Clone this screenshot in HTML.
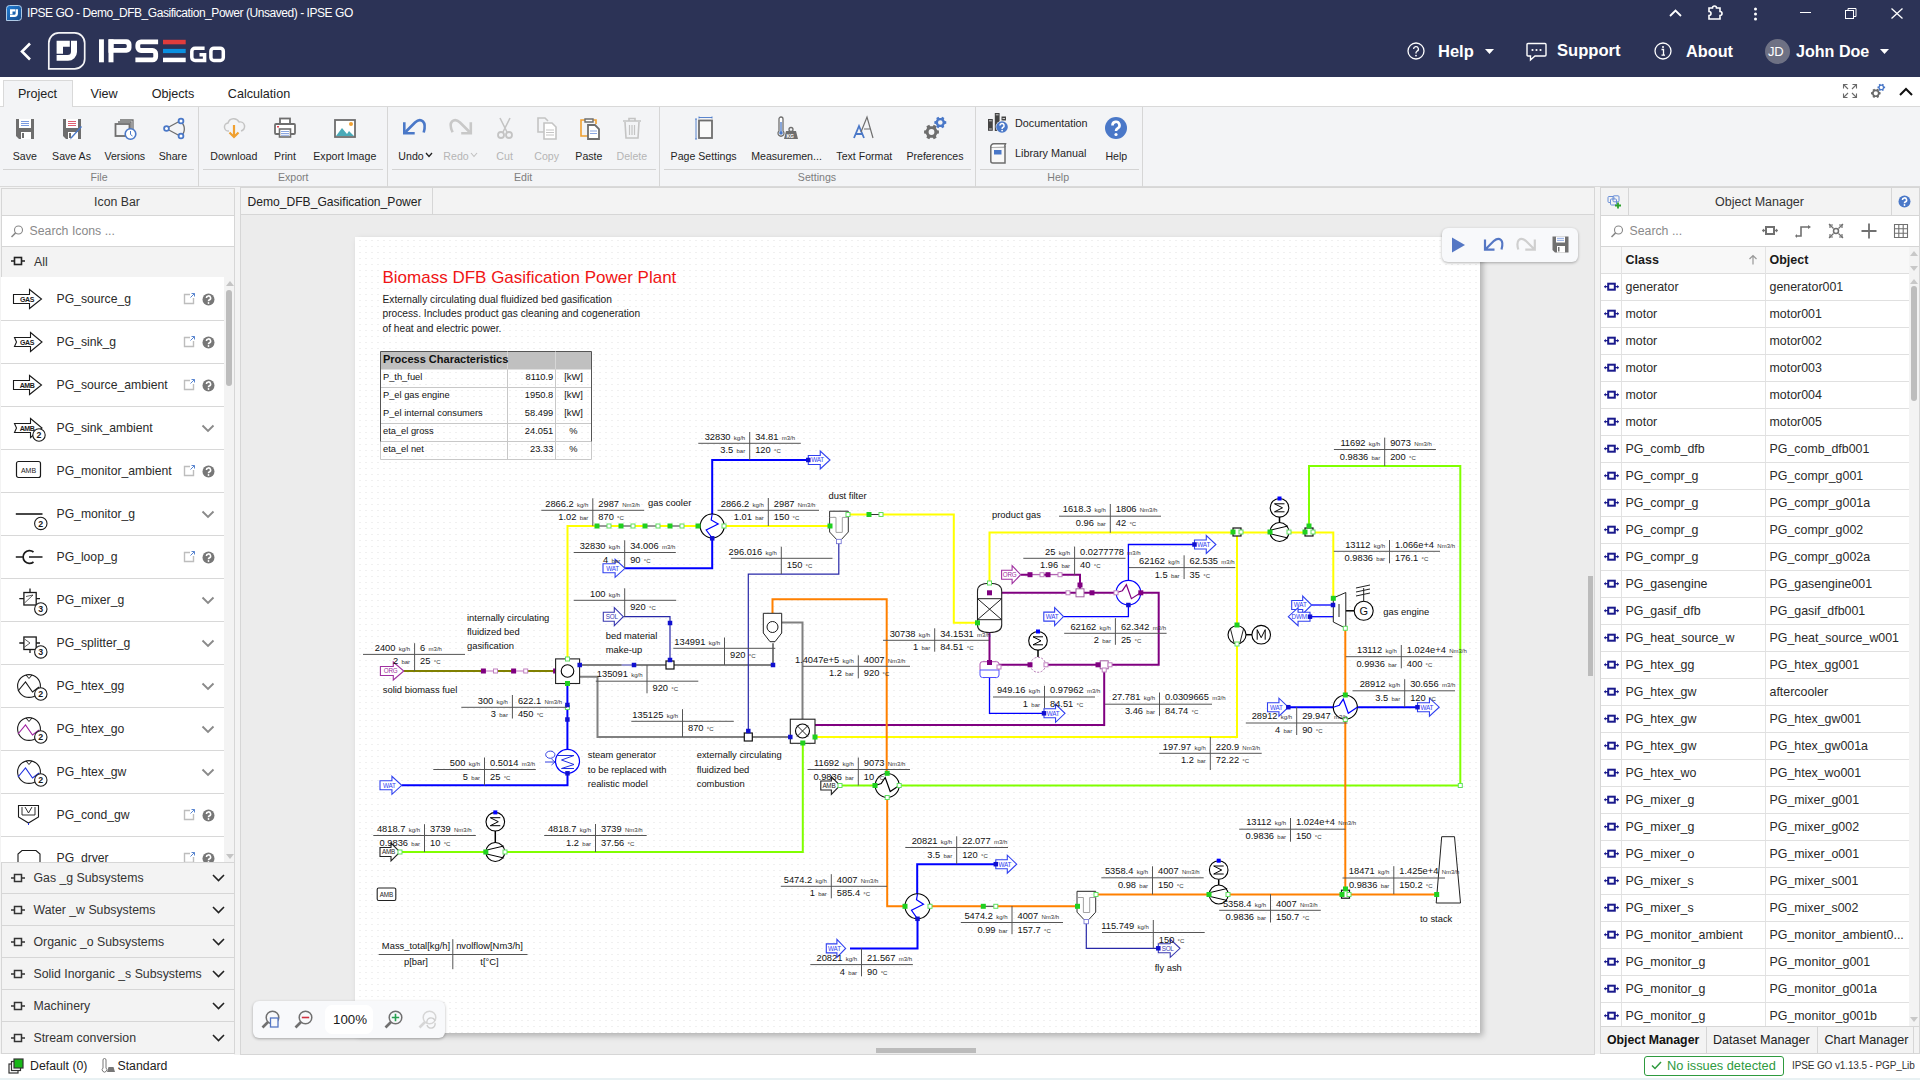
<!DOCTYPE html>
<html><head><meta charset="utf-8">
<style>

*{box-sizing:border-box;margin:0;padding:0}
html,body{width:1920px;height:1080px;overflow:hidden;background:#fff;font-family:"Liberation Sans",sans-serif;color:#222;position:relative}
.a{position:absolute}
.t{position:absolute;white-space:nowrap;line-height:1}
svg{position:absolute;overflow:visible}

</style></head><body>
<div class="a" style="left:0;top:0;width:1920px;height:77px;background:#2c3356"></div>
<svg style="left:5px;top:4px" width="18" height="18" viewBox="0 0 18 18"><defs><linearGradient id="ag" x1="0" y1="0" x2="1" y2="1"><stop offset="0" stop-color="#1e7ed8"/><stop offset="1" stop-color="#1a4a88"/></linearGradient></defs><path d="M1.5,16.5 V4.5 A3,3 0 0 1 4.5,1.5 H13.5 A3,3 0 0 1 16.5,4.5 V13.5 A3,3 0 0 1 13.5,16.5 Z" fill="url(#ag)" stroke="#c0d8f0" stroke-width="0.9"/><g transform="translate(1.26,1.77) scale(0.39)"><path d="M9.6,8.8 H22.8 V14.7 H16 V21.8 H9.6 Z M24,8.8 H30 V20 A9,9 0 0 1 21,28.8 H9.6 V23 H20.5 A3.5,3.5 0 0 0 24,19.5 Z" fill="#fff"/></g></svg>
<div class="t" style="left:27px;top:7px;font-size:12px;color:#fff;letter-spacing:-0.45px">IPSE GO - Demo_DFB_Gasification_Power (Unsaved) - IPSE GO</div>
<svg style="left:1669px;top:9px" width="13" height="8" viewBox="0 0 13 8"><path d="M1 7L6.5 1.5L12 7" stroke="#fff" stroke-width="1.8" fill="none"/></svg>
<svg style="left:1707px;top:5px" width="17" height="15" viewBox="0 0 17 15"><path d="M2 3h3.5a2 2 0 0 1 4 0H13v3.5a2 2 0 0 1 0 4V14H2v-3.5a2 2 0 0 0 0-4z" stroke="#fff" stroke-width="1.6" fill="none"/></svg>
<svg style="left:1753px;top:7px" width="5" height="14" viewBox="0 0 5 14"><circle cx="2.5" cy="2" r="1.5" fill="#fff"/><circle cx="2.5" cy="7" r="1.5" fill="#fff"/><circle cx="2.5" cy="12" r="1.5" fill="#fff"/></svg>
<div class="a" style="left:1800px;top:12px;width:11px;height:1px;background:#fff"></div>
<svg style="left:1845px;top:8px" width="12" height="11" viewBox="0 0 12 11"><rect x="0.5" y="2.5" width="8" height="8" stroke="#fff" fill="none"/><path d="M3 2.5V0.5h8v8H8.5" stroke="#fff" fill="none"/></svg>
<svg style="left:1891px;top:8px" width="12" height="11" viewBox="0 0 12 11"><path d="M0.5 0.5L11.5 10.5M11.5 0.5L0.5 10.5" stroke="#fff" stroke-width="1.3"/></svg>
<svg style="left:19px;top:42px" width="14" height="19" viewBox="0 0 14 19"><path d="M11 1.5L3 9.5L11 17.5" stroke="#fff" stroke-width="2.6" fill="none"/></svg>
<svg style="left:47px;top:32px" width="40" height="39" viewBox="0 0 40 39"><path d="M1.8,36.9 V10.9 A10,10 0 0 1 11.8,0.9 H27.7 A10,10 0 0 1 37.7,10.9 V26.9 A10,10 0 0 1 27.7,36.9 Z" stroke="#f4f4f6" stroke-width="1.7" fill="none"/><path d="M9.6,8.8 H22.8 V14.7 H16 V21.8 H9.6 Z M24,8.8 H30 V20 A9,9 0 0 1 21,28.8 H9.6 V23 H20.5 A3.5,3.5 0 0 0 24,19.5 Z" fill="#fff"/></svg>
<svg style="left:0;top:0" width="240" height="77" viewBox="0 0 240 77"><rect x="99" y="39.3" width="4.9" height="23" fill="#fff"/><rect x="108.5" y="39.3" width="5" height="23" fill="#fff"/><path fill-rule="evenodd" d="M108.5,39.3 H126.5 A5,5 0 0 1 131.5,44.3 V47.8 A5,5 0 0 1 126.5,52.8 H108.5 Z M113.5,44.1 H125.2 A1.6,1.6 0 0 1 126.8,45.7 V46.4 A1.6,1.6 0 0 1 125.2,48 H113.5 Z" fill="#fff"/><path d="M158.1,41.8 H141 A3.2,3.2 0 0 0 137.8,45 V47.3 A3.2,3.2 0 0 0 141,50.5 H152.5 A3.2,3.2 0 0 1 155.7,53.7 V56.7 A3.2,3.2 0 0 1 152.5,59.9 H135.4" stroke="#fff" stroke-width="4.8" fill="none"/><rect x="163" y="39.8" width="22.7" height="4.5" fill="#e03c3c"/><rect x="163" y="48.9" width="22.7" height="4.2" fill="#0a90e0"/><rect x="163" y="57.7" width="22.7" height="4.5" fill="#fff"/><path d="M204.6,48.2 H195 A3.2,3.2 0 0 0 191.8,51.4 V57.3 A3.2,3.2 0 0 0 195,60.5 H204.6 V54.8 H199.5" stroke="#fff" stroke-width="3.5" fill="none"/><rect x="210.9" y="48.2" width="12.4" height="12.3" rx="3" stroke="#fff" stroke-width="3.5" fill="none"/></svg>
<svg style="left:1407px;top:42px" width="18" height="18" viewBox="0 0 18 18"><circle cx="9" cy="9" r="8" stroke="#fff" stroke-width="1.3" fill="none"/><path d="M6.6 7a2.4 2.4 0 1 1 3.4 2.2c-.7.4-1 .8-1 1.6v.6" stroke="#fff" stroke-width="1.3" fill="none"/><circle cx="9" cy="13.6" r=".9" fill="#fff"/></svg>
<div class="t" style="left:1438px;top:43px;font-size:16.5px;font-weight:bold;color:#fff">Help</div>
<svg style="left:1485px;top:49px" width="9" height="5" viewBox="0 0 9 5"><path d="M0 0H9L4.5 5Z" fill="#fff"/></svg>
<svg style="left:1526px;top:42px" width="21" height="19" viewBox="0 0 21 19"><path d="M2 1.5H19Q20 1.5 20 2.5V13Q20 14 19 14H9L4.5 18V14H2Q1 14 1 13V2.5Q1 1.5 2 1.5Z" stroke="#fff" stroke-width="1.4" fill="none"/><circle cx="6.5" cy="8" r="1.1" fill="#fff"/><circle cx="10.5" cy="8" r="1.1" fill="#fff"/><circle cx="14.5" cy="8" r="1.1" fill="#fff"/></svg>
<div class="t" style="left:1557px;top:43px;font-size:16.6px;font-weight:bold;color:#fff">Support</div>
<svg style="left:1654px;top:42px" width="18" height="18" viewBox="0 0 18 18"><circle cx="9" cy="9" r="8" stroke="#fff" stroke-width="1.3" fill="none"/><circle cx="9" cy="5" r="1" fill="#fff"/><path d="M7.5 7.5H9.5V13M7.5 13.2H11" stroke="#fff" stroke-width="1.3" fill="none"/></svg>
<div class="t" style="left:1686px;top:43px;font-size:16.3px;font-weight:bold;color:#fff">About</div>
<div class="a" style="left:1765px;top:39px;width:25px;height:25px;border-radius:50%;background:#6e7184"></div>
<div class="t" style="left:1768px;top:45px;font-size:13px;color:#fff;letter-spacing:-0.3px">JD</div>
<div class="t" style="left:1796px;top:43px;font-size:16.1px;font-weight:bold;color:#fff">John Doe</div>
<svg style="left:1880px;top:49px" width="9" height="5" viewBox="0 0 9 5"><path d="M0 0H9L4.5 5Z" fill="#fff"/></svg>
<div class="a" style="left:0;top:106px;width:1920px;height:1px;background:#d9d9d9"></div>
<div class="a" style="left:3px;top:80px;width:70px;height:27px;background:#f3f4f6;border:1px solid #d9d9d9;border-bottom:none"></div>
<div class="t" style="left:37.5px;top:88px;font-size:12.6px;color:#222;transform:translateX(-50%)">Project</div>
<div class="t" style="left:104px;top:88px;font-size:12.6px;color:#222;transform:translateX(-50%)">View</div>
<div class="t" style="left:173px;top:88px;font-size:12.6px;color:#222;transform:translateX(-50%)">Objects</div>
<div class="t" style="left:259px;top:88px;font-size:12.6px;color:#222;transform:translateX(-50%)">Calculation</div>
<svg style="left:1842px;top:83px" width="16" height="16" viewBox="0 0 16 16"><path d="M1.5 5.5V1.5H5.5M1.5 1.5L6 6M14.5 5.5V1.5H10.5M14.5 1.5L10 6M1.5 10.5V14.5H5.5M1.5 14.5L6 10M14.5 10.5V14.5H10.5M14.5 14.5L10 10" stroke="#6a6a6a" stroke-width="1.1" fill="none"/></svg>
<svg style="left:1860px;top:78px" width="30" height="26" viewBox="1860 78 30 26"><path d="M1879.51,92.09 L1880.59,92.28 L1880.59,94.32 L1879.51,94.51 L1878.70,95.91 L1879.08,96.94 L1877.31,97.96 L1876.61,97.11 L1874.99,97.11 L1874.29,97.96 L1872.52,96.94 L1872.90,95.91 L1872.09,94.51 L1871.01,94.32 L1871.01,92.28 L1872.09,92.09 L1872.90,90.69 L1872.52,89.66 L1874.29,88.64 L1874.99,89.49 L1876.61,89.49 L1877.31,88.64 L1879.08,89.66 L1878.70,90.69Z M1877.8999999999999,93.3 A2.1,2.1 0 1 0 1873.7,93.3 A2.1,2.1 0 1 0 1877.8999999999999,93.3Z" fill="#6a6a6a" fill-rule="evenodd"/><path d="M1884.15,86.47 L1885.11,86.59 L1885.11,88.21 L1884.15,88.33 L1883.53,89.41 L1883.91,90.30 L1882.51,91.11 L1881.92,90.33 L1880.68,90.33 L1880.09,91.11 L1878.69,90.30 L1879.07,89.41 L1878.45,88.33 L1877.49,88.21 L1877.49,86.59 L1878.45,86.47 L1879.07,85.39 L1878.69,84.50 L1880.09,83.69 L1880.68,84.47 L1881.92,84.47 L1882.51,83.69 L1883.91,84.50 L1883.53,85.39Z M1882.8999999999999,87.4 A1.6,1.6 0 1 0 1879.7,87.4 A1.6,1.6 0 1 0 1882.8999999999999,87.4Z" fill="#4a78c8" fill-rule="evenodd"/></svg>
<svg style="left:1899px;top:87px" width="14" height="9" viewBox="0 0 14 9"><path d="M1 8L7 2L13 8" stroke="#111" stroke-width="2" fill="none"/></svg>
<div class="a" style="left:0;top:107px;width:1920px;height:80px;background:#f3f4f6;border-bottom:1px solid #d9d9d9"></div>
<div class="a" style="left:198px;top:107px;width:1px;height:80px;background:#d6d6d6"></div>
<div class="a" style="left:387px;top:107px;width:1px;height:80px;background:#d6d6d6"></div>
<div class="a" style="left:659px;top:107px;width:1px;height:80px;background:#d6d6d6"></div>
<div class="a" style="left:975px;top:107px;width:1px;height:80px;background:#d6d6d6"></div>
<div class="a" style="left:1142px;top:107px;width:1px;height:80px;background:#d6d6d6"></div>
<div class="a" style="left:3px;top:169px;width:191px;height:1px;background:#d3d3d3"></div>
<div class="a" style="left:203px;top:169px;width:180px;height:1px;background:#d3d3d3"></div>
<div class="a" style="left:392px;top:169px;width:264px;height:1px;background:#d3d3d3"></div>
<div class="a" style="left:664px;top:169px;width:307px;height:1px;background:#d3d3d3"></div>
<div class="a" style="left:980px;top:169px;width:159px;height:1px;background:#d3d3d3"></div>
<svg style="left:12.75px;top:116px" width="24" height="24" viewBox="0 0 24 24"><path d="M3 3H21V23H6L3 20Z" fill="#6e6e6e"/><rect x="6" y="3" width="12" height="9" fill="#fff"/><path d="M8 5.5H16M8 7.5H16M8 9.5H16" stroke="#7b9be0" stroke-width="1.1"/><rect x="8" y="16" width="10" height="7" fill="#fff"/><rect x="9" y="17" width="2" height="5" fill="#6e6e6e"/></svg>
<div class="t" style="left:24.75px;top:151px;font-size:10.6px;color:#1f1f1f;transform:translateX(-50%)">Save</div>
<svg style="left:59.5px;top:116px" width="24" height="24" viewBox="0 0 24 24"><path d="M3 3H21V23H6L3 20Z" fill="#6e6e6e"/><rect x="6" y="3" width="12" height="9" fill="#fff"/><path d="M8 5.5H16M8 7.5H16M8 9.5H16" stroke="#e06070" stroke-width="1.1"/><rect x="8" y="16" width="10" height="7" fill="#fff"/><rect x="9" y="17" width="2" height="5" fill="#6e6e6e"/><path d="M22 11L12 22L10 23.5L11 21L21 10Z" fill="#4a78c8"/></svg>
<div class="t" style="left:71.5px;top:151px;font-size:10.6px;color:#1f1f1f;transform:translateX(-50%)">Save As</div>
<svg style="left:112.8px;top:116px" width="24" height="24" viewBox="0 0 24 24"><path d="M7 4H20V15" stroke="#6e6e6e" stroke-width="1.3" fill="none"/><path d="M5 6H18V17" stroke="#6e6e6e" stroke-width="1.3" fill="none"/><rect x="2.5" y="8" width="14" height="12" stroke="#6e6e6e" stroke-width="1.8" fill="#f3f4f6"/><circle cx="17.5" cy="18" r="5.3" fill="#fff" stroke="#4a78c8" stroke-width="1.6"/><path d="M17.5 15V18.5L19.5 20" stroke="#4a78c8" stroke-width="1" fill="none"/></svg>
<div class="t" style="left:124.8px;top:151px;font-size:10.6px;color:#1f1f1f;transform:translateX(-50%)">Versions</div>
<svg style="left:160.9px;top:116px" width="24" height="24" viewBox="0 0 24 24"><path d="M20 6A9 9 0 0 1 20 20" stroke="#6e6e6e" stroke-width="1.3" fill="none"/><path d="M6 12L19 5M6 13L19 20" stroke="#6e6e6e" stroke-width="1.3" fill="none"/><circle cx="20" cy="5" r="2.4" fill="#fff" stroke="#4a78c8" stroke-width="1.8"/><circle cx="5.5" cy="12.5" r="2.4" fill="#fff" stroke="#4a78c8" stroke-width="1.8"/><circle cx="20" cy="20" r="2.4" fill="#fff" stroke="#4a78c8" stroke-width="1.8"/></svg>
<div class="t" style="left:172.9px;top:151px;font-size:10.6px;color:#1f1f1f;transform:translateX(-50%)">Share</div>
<svg style="left:221.8px;top:116px" width="24" height="24" viewBox="0 0 24 24"><path d="M7 15A4 4 0 0 1 6 7A6 6 0 0 1 17 6A4.5 4.5 0 0 1 19 15" stroke="#c4c4c4" stroke-width="1.5" fill="none"/><path d="M12 9V21M7.5 16.5L12 21L16.5 16.5" stroke="#f0a030" stroke-width="2.2" fill="none"/></svg>
<div class="t" style="left:233.8px;top:151px;font-size:10.6px;color:#1f1f1f;transform:translateX(-50%)">Download</div>
<svg style="left:273.0px;top:116px" width="24" height="24" viewBox="0 0 24 24"><rect x="7" y="2.5" width="10" height="6" stroke="#6e6e6e" stroke-width="1.8" fill="#fff"/><rect x="2" y="8" width="20" height="10" rx="1" stroke="#6e6e6e" stroke-width="1.8" fill="#fff"/><rect x="4" y="10" width="2" height="1.5" fill="#e04050"/><rect x="6.5" y="13" width="11" height="8" stroke="#6e6e6e" stroke-width="1.6" fill="#fff"/><path d="M8 15.5H16M8 17.5H16M8 19.3H16" stroke="#8aa6e0" stroke-width="1"/></svg>
<div class="t" style="left:285px;top:151px;font-size:10.6px;color:#1f1f1f;transform:translateX(-50%)">Print</div>
<svg style="left:332.8px;top:116px" width="24" height="24" viewBox="0 0 24 24"><rect x="2" y="4" width="20" height="17" stroke="#6e6e6e" stroke-width="1.8" fill="#fff"/><path d="M3 20L9 12L14 18L16 15L21 20Z" fill="#4aaab8"/><circle cx="18" cy="8" r="2" fill="#f0a030"/></svg>
<div class="t" style="left:344.8px;top:151px;font-size:10.6px;color:#1f1f1f;transform:translateX(-50%)">Export Image</div>
<svg style="left:399.0px;top:116px" width="24" height="24" viewBox="0 0 24 24"></svg>
<div class="t" style="left:411px;top:151px;font-size:10.6px;color:#1f1f1f;transform:translateX(-50%)">Undo</div>
<svg style="left:444.0px;top:116px" width="24" height="24" viewBox="0 0 24 24"></svg>
<div class="t" style="left:456px;top:151px;font-size:10.6px;color:#b5b5b5;transform:translateX(-50%)">Redo</div>
<svg style="left:492.6px;top:116px" width="24" height="24" viewBox="0 0 24 24"><path d="M7 2L14 16M17 2L10 16" stroke="#c4c4c4" stroke-width="1.6"/><circle cx="8" cy="19" r="3" stroke="#c4c4c4" stroke-width="1.8" fill="none"/><circle cx="16" cy="19" r="3" stroke="#c4c4c4" stroke-width="1.8" fill="none"/></svg>
<div class="t" style="left:504.6px;top:151px;font-size:10.6px;color:#b5b5b5;transform:translateX(-50%)">Cut</div>
<svg style="left:534.6px;top:116px" width="24" height="24" viewBox="0 0 24 24"><path d="M10 16H3V2H10L13 5" stroke="#c4c4c4" stroke-width="1.6" fill="none"/><path d="M9 7H17L21 11V23H9Z" stroke="#c4c4c4" stroke-width="1.6" fill="#fff"/><path d="M11 14H19M11 16.5H19M11 19H19" stroke="#c4c4c4" stroke-width="1"/></svg>
<div class="t" style="left:546.6px;top:151px;font-size:10.6px;color:#b5b5b5;transform:translateX(-50%)">Copy</div>
<svg style="left:576.9px;top:116px" width="24" height="24" viewBox="0 0 24 24"><path d="M9 4H4V20H11" stroke="#f0a030" stroke-width="1.6" fill="none"/><path d="M15 4H19V8" stroke="#f0a030" stroke-width="1.6" fill="none"/><path d="M8 3H16V6H8Z" stroke="#6e6e6e" stroke-width="1.4" fill="#fff"/><path d="M11 9H18L22 13V23H11Z" stroke="#6e6e6e" stroke-width="1.8" fill="#fff"/><path d="M13 15H20M13 17.5H20" stroke="#8aa6e0" stroke-width="1.2"/></svg>
<div class="t" style="left:588.9px;top:151px;font-size:10.6px;color:#1f1f1f;transform:translateX(-50%)">Paste</div>
<svg style="left:619.8px;top:116px" width="24" height="24" viewBox="0 0 24 24"><path d="M3 5H21M9 5V2.5H15V5" stroke="#c4c4c4" stroke-width="1.6" fill="none"/><path d="M5 6L6 22H18L19 6" stroke="#c4c4c4" stroke-width="1.6" fill="none"/><path d="M9.5 9V19M12 9V19M14.5 9V19" stroke="#c4c4c4" stroke-width="1.2"/></svg>
<div class="t" style="left:631.8px;top:151px;font-size:10.6px;color:#b5b5b5;transform:translateX(-50%)">Delete</div>
<svg style="left:691.6px;top:116px" width="24" height="24" viewBox="0 0 24 24"><path d="M4 3V23M3 3H5M3 23H5" stroke="#4a78c8" stroke-width="0.9"/><path d="M7 1.5H20M7 0.5V2.5M20 0.5V2.5" stroke="#4a78c8" stroke-width="0.9"/><rect x="7" y="4.5" width="13" height="17.5" stroke="#6e6e6e" stroke-width="1.8" fill="#fafafa"/></svg>
<div class="t" style="left:703.6px;top:151px;font-size:10.6px;color:#1f1f1f;transform:translateX(-50%)">Page Settings</div>
<svg style="left:774.5px;top:116px" width="24" height="24" viewBox="0 0 24 24"><path d="M4 15V3A2 2 0 0 1 8 3V15A3 3 0 1 1 4 15Z" stroke="#6e6e6e" stroke-width="1.3" fill="#fff"/><path d="M6 6V16" stroke="#4a78c8" stroke-width="1.3"/><circle cx="6" cy="17" r="1.8" fill="#4a78c8"/><path d="M9 23L11 15H21L23 23Z" fill="#6e6e6e"/><circle cx="16" cy="13.5" r="2" stroke="#6e6e6e" stroke-width="1.3" fill="none"/><text x="11.5" y="21.5" font-size="5" fill="#fff" font-family="Liberation Sans" font-weight="bold">KG</text></svg>
<div class="t" style="left:786.5px;top:151px;font-size:10.6px;color:#1f1f1f;transform:translateX(-50%)">Measuremen...</div>
<svg style="left:852.3px;top:116px" width="24" height="24" viewBox="0 0 24 24"><path d="M2 22L7 10L12 22M4 18H10" stroke="#4a78c8" stroke-width="1.8" fill="none"/><path d="M9 16L15 1L21 22M12 13H18" stroke="#6e6e6e" stroke-width="1.2" fill="none"/></svg>
<div class="t" style="left:864.3px;top:151px;font-size:10.6px;color:#1f1f1f;transform:translateX(-50%)">Text Format</div>
<svg style="left:923.0px;top:116px" width="24" height="24" viewBox="0 0 24 24"><path d="M14.21,14.15 L15.93,14.42 L15.93,17.58 L14.21,17.85 L12.96,20.01 L13.59,21.65 L10.85,23.23 L9.75,21.87 L7.25,21.87 L6.15,23.23 L3.41,21.65 L4.04,20.01 L2.79,17.85 L1.07,17.58 L1.07,14.42 L2.79,14.15 L4.04,11.99 L3.41,10.35 L6.15,8.77 L7.25,10.13 L9.75,10.13 L10.85,8.77 L13.59,10.35 L12.96,11.99Z M11.4,16 A2.9,2.9 0 1 0 5.6,16 A2.9,2.9 0 1 0 11.4,16Z" fill="#6e6e6e" fill-rule="evenodd"/><path d="M21.77,5.05 L23.27,5.23 L23.27,7.77 L21.77,7.95 L20.79,9.64 L21.38,11.03 L19.19,12.30 L18.28,11.10 L16.32,11.10 L15.41,12.30 L13.22,11.03 L13.81,9.64 L12.83,7.95 L11.33,7.77 L11.33,5.23 L12.83,5.05 L13.81,3.36 L13.22,1.97 L15.41,0.70 L16.32,1.90 L18.28,1.90 L19.19,0.70 L21.38,1.97 L20.79,3.36Z M19.6,6.5 A2.3,2.3 0 1 0 15.0,6.5 A2.3,2.3 0 1 0 19.6,6.5Z" fill="#4a78c8" fill-rule="evenodd"/></svg>
<div class="t" style="left:935px;top:151px;font-size:10.6px;color:#1f1f1f;transform:translateX(-50%)">Preferences</div>
<svg style="left:1104.3px;top:116px" width="24" height="24" viewBox="0 0 24 24"><circle cx="12" cy="12" r="11" fill="#4a78c8"/><path d="M8.5 9.5A3.5 3.5 0 1 1 13.5 12.5C12.5 13 12 13.5 12 15" stroke="#fff" stroke-width="2.6" fill="none"/><circle cx="12" cy="18.5" r="1.6" fill="#fff"/></svg>
<div class="t" style="left:1116.3px;top:151px;font-size:10.6px;color:#1f1f1f;transform:translateX(-50%)">Help</div>
<svg style="left:0;top:0" width="500" height="150" viewBox="0 0 500 150"><path d="M404.3,122.2 V133.2 H414.7" stroke="#4a78c8" stroke-width="2.6" fill="none"/><path d="M405.5,132 L415,122.5 Q419.5,118.5 423,121.5 Q426,124.5 423.7,132.5" stroke="#4a78c8" stroke-width="2.6" fill="none"/><path d="M470.8,122.2 V133.2 H461.2" stroke="#c8c8c8" stroke-width="2.6" fill="none"/><path d="M469.6,132 L460,122.5 Q455.5,118.5 452,121.5 Q449,124.5 452.6,132.3" stroke="#c8c8c8" stroke-width="2.6" fill="none"/></svg>
<svg style="left:425px;top:152px" width="8" height="6" viewBox="0 0 8 6"><path d="M1 1L4 4.5L7 1" stroke="#222" stroke-width="1.3" fill="none"/></svg>
<svg style="left:470px;top:152px" width="8" height="6" viewBox="0 0 8 6"><path d="M1 1L4 4.5L7 1" stroke="#c0c0c0" stroke-width="1.1" fill="none"/></svg>
<svg style="left:987px;top:113px" width="22" height="22" viewBox="0 0 22 22"><rect x="1" y="6" width="4.8" height="11.8" fill="#444"/><rect x="7.8" y="0" width="4.8" height="18" fill="#444"/><rect x="14.5" y="3.5" width="4.5" height="4" fill="#444"/><path d="M2 7.8H4.8M2 16H4.8M8.8 1.8H11.6M15.5 5.5H18" stroke="#ddd" stroke-width="0.9"/><circle cx="15" cy="14" r="6.3" fill="#f3f4f6"/><circle cx="15" cy="14" r="5.8" fill="#4a78c8"/><path d="M12.9 12.6A2.1 2.1 0 1 1 15.8 14.5C15.3 14.8 15.1 15.2 15.1 15.9" stroke="#fff" stroke-width="1.5" fill="none"/><circle cx="15.1" cy="17.6" r=".9" fill="#fff"/></svg>
<div class="t" style="left:1015px;top:118px;font-size:10.8px;color:#1f1f1f">Documentation</div>
<svg style="left:988px;top:142px" width="20" height="23" viewBox="0 0 20 23"><path d="M2.8 5V19A2 2 0 0 0 4.8 21H17V4.8H4.8Z" stroke="#6e6e6e" stroke-width="1.5" fill="#f8f8f8"/><path d="M2.8 5A3 3 0 0 1 5.8 1.8H17.5L16.5 4.8" stroke="#6e6e6e" stroke-width="1.5" fill="#fff"/><rect x="6" y="8" width="7.5" height="4.5" fill="#4a78c8"/></svg>
<div class="t" style="left:1015px;top:148px;font-size:10.8px;color:#1f1f1f">Library Manual</div>
<div class="t" style="left:99px;top:172px;font-size:10.6px;color:#7d7d7d;transform:translateX(-50%)">File</div>
<div class="t" style="left:293.2px;top:172px;font-size:10.6px;color:#7d7d7d;transform:translateX(-50%)">Export</div>
<div class="t" style="left:523.2px;top:172px;font-size:10.6px;color:#7d7d7d;transform:translateX(-50%)">Edit</div>
<div class="t" style="left:817px;top:172px;font-size:10.6px;color:#7d7d7d;transform:translateX(-50%)">Settings</div>
<div class="t" style="left:1058.2px;top:172px;font-size:10.6px;color:#7d7d7d;transform:translateX(-50%)">Help</div>
<div class="a" style="left:234px;top:187px;width:7px;height:868px;background:#f3f3f3"></div>
<div class="a" style="left:0;top:187px;width:236px;height:867px;background:#f3f3f3"></div>
<div class="a" style="left:1px;top:188px;width:234px;height:866px;border:1px solid #d6d6d6;background:#fff"></div>
<div class="a" style="left:1px;top:188px;width:234px;height:28px;background:#f3f3f3;border:1px solid #d6d6d6"></div>
<div class="t" style="left:117px;top:195.5px;font-size:12.3px;color:#333;transform:translateX(-50%)">Icon Bar</div>
<div class="a" style="left:1px;top:246px;width:234px;height:32px;background:#f3f3f3;border:1px solid #d6d6d6;border-top:1px solid #d6d6d6"></div>
<svg style="left:10px;top:225px" width="14" height="13" viewBox="0 0 14 13"><circle cx="8.5" cy="5" r="4" stroke="#888" stroke-width="1.1" fill="none"/><path d="M5.6 7.9L1.5 12" stroke="#888" stroke-width="1.5"/></svg>
<div class="t" style="left:29.5px;top:225px;font-size:12.3px;color:#8a8a8a">Search Icons ...</div>
<svg style="left:11px;top:256px" width="14" height="11" viewBox="0 0 14 11"><rect x="3.5" y="1.5" width="7" height="7" stroke="#222" stroke-width="1.6" fill="none"/><path d="M0 5H3M11 5H14" stroke="#222" stroke-width="1.4"/></svg>
<div class="t" style="left:34px;top:256px;font-size:12.3px;color:#333">All</div>
<div class="a" style="left:1px;top:277px;width:233px;height:585px;overflow:hidden;background:#fff">
<div class="a" style="left:0;top:1px;width:223px;height:43px;border-bottom:1px solid #d8d8d8"></div>
<svg style="left:12px;top:12px" width="32" height="32" viewBox="0 0 32 32"><path d="M0.5 5.5H16.5V0.5L28.5 10L16.5 19.5V14.5H0.5Z" fill="#fff" stroke="#1a1a1a" stroke-width="1.1"/><text x="14" y="13.2" font-size="7" font-weight="bold" text-anchor="middle" font-family="Liberation Sans" fill="#1a1a1a" letter-spacing="-0.4">GAS</text></svg>
<div class="t" style="left:55.5px;top:16px;font-size:12.2px;color:#2a2a2a">PG_source_g</div>
<svg style="left:181px;top:15px" width="14" height="14" viewBox="0 0 14 14"><path d="M8 2.5H2.5V11.5H11.5V6" stroke="#bdbdbd" stroke-width="1.4" fill="none"/><path d="M8.5 5.5L12.5 1.5M9.5 1.5H12.5V4.5" stroke="#5a86d0" stroke-width="1" fill="none"/></svg>
<svg style="left:201px;top:16px" width="13" height="13" viewBox="0 0 13 13"><circle cx="6.5" cy="6.5" r="6" fill="#777"/><path d="M4.4 5A2.1 2.1 0 1 1 7.2 7C6.7 7.3 6.5 7.6 6.5 8.3" stroke="#fff" stroke-width="1.6" fill="none"/><circle cx="6.5" cy="10" r=".9" fill="#fff"/></svg>
<div class="a" style="left:0;top:44px;width:223px;height:43px;border-bottom:1px solid #d8d8d8"></div>
<svg style="left:12px;top:55px" width="32" height="32" viewBox="0 0 32 32"><path d="M1.5 5.5H17.5V0.5L29 10L17.5 19.5V14.5H1.5L3.5 10Z" fill="#fff" stroke="#1a1a1a" stroke-width="1.1"/><text x="14" y="13.2" font-size="7" font-weight="bold" text-anchor="middle" font-family="Liberation Sans" fill="#1a1a1a" letter-spacing="-0.4">GAS</text></svg>
<div class="t" style="left:55.5px;top:59px;font-size:12.2px;color:#2a2a2a">PG_sink_g</div>
<svg style="left:181px;top:58px" width="14" height="14" viewBox="0 0 14 14"><path d="M8 2.5H2.5V11.5H11.5V6" stroke="#bdbdbd" stroke-width="1.4" fill="none"/><path d="M8.5 5.5L12.5 1.5M9.5 1.5H12.5V4.5" stroke="#5a86d0" stroke-width="1" fill="none"/></svg>
<svg style="left:201px;top:59px" width="13" height="13" viewBox="0 0 13 13"><circle cx="6.5" cy="6.5" r="6" fill="#777"/><path d="M4.4 5A2.1 2.1 0 1 1 7.2 7C6.7 7.3 6.5 7.6 6.5 8.3" stroke="#fff" stroke-width="1.6" fill="none"/><circle cx="6.5" cy="10" r=".9" fill="#fff"/></svg>
<div class="a" style="left:0;top:87px;width:223px;height:43px;border-bottom:1px solid #d8d8d8"></div>
<svg style="left:12px;top:98px" width="32" height="32" viewBox="0 0 32 32"><path d="M0.5 5.5H16.5V0.5L28.5 10L16.5 19.5V14.5H0.5Z" fill="#fff" stroke="#1a1a1a" stroke-width="1.1"/><text x="14" y="13.2" font-size="7" font-weight="bold" text-anchor="middle" font-family="Liberation Sans" fill="#1a1a1a" letter-spacing="-0.4">AMB</text></svg>
<div class="t" style="left:55.5px;top:102px;font-size:12.2px;color:#2a2a2a">PG_source_ambient</div>
<svg style="left:181px;top:101px" width="14" height="14" viewBox="0 0 14 14"><path d="M8 2.5H2.5V11.5H11.5V6" stroke="#bdbdbd" stroke-width="1.4" fill="none"/><path d="M8.5 5.5L12.5 1.5M9.5 1.5H12.5V4.5" stroke="#5a86d0" stroke-width="1" fill="none"/></svg>
<svg style="left:201px;top:102px" width="13" height="13" viewBox="0 0 13 13"><circle cx="6.5" cy="6.5" r="6" fill="#777"/><path d="M4.4 5A2.1 2.1 0 1 1 7.2 7C6.7 7.3 6.5 7.6 6.5 8.3" stroke="#fff" stroke-width="1.6" fill="none"/><circle cx="6.5" cy="10" r=".9" fill="#fff"/></svg>
<div class="a" style="left:0;top:130px;width:223px;height:43px;border-bottom:1px solid #d8d8d8"></div>
<svg style="left:12px;top:141px" width="32" height="32" viewBox="0 0 32 32"><path d="M1.5 5.5H17.5V0.5L29 10L17.5 19.5V14.5H1.5L3.5 10Z" fill="#fff" stroke="#1a1a1a" stroke-width="1.1"/><text x="14" y="13.2" font-size="7" font-weight="bold" text-anchor="middle" font-family="Liberation Sans" fill="#1a1a1a" letter-spacing="-0.4">AMB</text><circle cx="26" cy="17" r="6.2" fill="#fff" stroke="#1a1a1a" stroke-width="1.1"/><text x="26" y="20.2" font-size="8.8" font-weight="bold" text-anchor="middle" font-family="Liberation Sans" fill="#1a1a1a">2</text></svg>
<div class="t" style="left:55.5px;top:145px;font-size:12.2px;color:#2a2a2a">PG_sink_ambient</div>
<svg style="left:199.5px;top:147px" width="14" height="9" viewBox="0 0 14 9"><path d="M1.5 1.5L7 7L12.5 1.5" stroke="#8a8a8a" stroke-width="1.9" fill="none"/></svg>
<div class="a" style="left:0;top:173px;width:223px;height:43px;border-bottom:1px solid #d8d8d8"></div>
<svg style="left:12px;top:181px" width="32" height="32" viewBox="0 0 32 32"><rect x="3.5" y="3.5" width="24" height="16" rx="2" fill="#fff" stroke="#1a1a1a" stroke-width="1.2"/><text x="15.5" y="14.5" font-size="7" text-anchor="middle" font-family="Liberation Sans" fill="#1a1a1a">AMB</text></svg>
<div class="t" style="left:55.5px;top:188px;font-size:12.2px;color:#2a2a2a">PG_monitor_ambient</div>
<svg style="left:181px;top:187px" width="14" height="14" viewBox="0 0 14 14"><path d="M8 2.5H2.5V11.5H11.5V6" stroke="#bdbdbd" stroke-width="1.4" fill="none"/><path d="M8.5 5.5L12.5 1.5M9.5 1.5H12.5V4.5" stroke="#5a86d0" stroke-width="1" fill="none"/></svg>
<svg style="left:201px;top:188px" width="13" height="13" viewBox="0 0 13 13"><circle cx="6.5" cy="6.5" r="6" fill="#777"/><path d="M4.4 5A2.1 2.1 0 1 1 7.2 7C6.7 7.3 6.5 7.6 6.5 8.3" stroke="#fff" stroke-width="1.6" fill="none"/><circle cx="6.5" cy="10" r=".9" fill="#fff"/></svg>
<div class="a" style="left:0;top:216px;width:223px;height:43px;border-bottom:1px solid #d8d8d8"></div>
<svg style="left:12px;top:225px" width="32" height="32" viewBox="0 0 32 32"><path d="M2.8 12H29.5" stroke="#1a1a1a" stroke-width="1.6"/><circle cx="27.8" cy="21.4" r="6.2" fill="#fff" stroke="#1a1a1a" stroke-width="1.1"/><text x="27.8" y="24.599999999999998" font-size="8.8" font-weight="bold" text-anchor="middle" font-family="Liberation Sans" fill="#1a1a1a">2</text></svg>
<div class="t" style="left:55.5px;top:231px;font-size:12.2px;color:#2a2a2a">PG_monitor_g</div>
<svg style="left:199.5px;top:233px" width="14" height="9" viewBox="0 0 14 9"><path d="M1.5 1.5L7 7L12.5 1.5" stroke="#8a8a8a" stroke-width="1.9" fill="none"/></svg>
<div class="a" style="left:0;top:259px;width:223px;height:43px;border-bottom:1px solid #d8d8d8"></div>
<svg style="left:12px;top:268px" width="32" height="32" viewBox="0 0 32 32"><path d="M2.8 12H9.8M16 12H29.5" stroke="#1a1a1a" stroke-width="1.4"/><path d="M20.5 7A6.4 6.4 0 1 0 20.5 17" stroke="#1a1a1a" stroke-width="1.7" fill="none"/></svg>
<div class="t" style="left:55.5px;top:274px;font-size:12.2px;color:#2a2a2a">PG_loop_g</div>
<svg style="left:181px;top:273px" width="14" height="14" viewBox="0 0 14 14"><path d="M8 2.5H2.5V11.5H11.5V6" stroke="#bdbdbd" stroke-width="1.4" fill="none"/><path d="M8.5 5.5L12.5 1.5M9.5 1.5H12.5V4.5" stroke="#5a86d0" stroke-width="1" fill="none"/></svg>
<svg style="left:201px;top:274px" width="13" height="13" viewBox="0 0 13 13"><circle cx="6.5" cy="6.5" r="6" fill="#777"/><path d="M4.4 5A2.1 2.1 0 1 1 7.2 7C6.7 7.3 6.5 7.6 6.5 8.3" stroke="#fff" stroke-width="1.6" fill="none"/><circle cx="6.5" cy="10" r=".9" fill="#fff"/></svg>
<div class="a" style="left:0;top:302px;width:223px;height:43px;border-bottom:1px solid #d8d8d8"></div>
<svg style="left:12px;top:310px" width="32" height="32" viewBox="0 0 32 32"><rect x="10.9" y="5.5" width="12.3" height="12.5" fill="#fff" stroke="#1a1a1a" stroke-width="1.3"/><path d="M17 1.5V5.5M6.3 11.7H10.9M23.2 11.7H27" stroke="#1a1a1a" stroke-width="1.3"/><path d="M11.5 16L20 8L13 9.5" stroke="#1a1a1a" stroke-width=".7" fill="none"/><circle cx="27.8" cy="22" r="6.2" fill="#fff" stroke="#1a1a1a" stroke-width="1.1"/><text x="27.8" y="25.2" font-size="8.8" font-weight="bold" text-anchor="middle" font-family="Liberation Sans" fill="#1a1a1a">3</text></svg>
<div class="t" style="left:55.5px;top:317px;font-size:12.2px;color:#2a2a2a">PG_mixer_g</div>
<svg style="left:199.5px;top:319px" width="14" height="9" viewBox="0 0 14 9"><path d="M1.5 1.5L7 7L12.5 1.5" stroke="#8a8a8a" stroke-width="1.9" fill="none"/></svg>
<div class="a" style="left:0;top:345px;width:223px;height:43px;border-bottom:1px solid #d8d8d8"></div>
<svg style="left:12px;top:353px" width="32" height="32" viewBox="0 0 32 32"><rect x="10.9" y="7" width="12.3" height="12.5" fill="#fff" stroke="#1a1a1a" stroke-width="1.3"/><path d="M17 19.5V23M6.3 13H10.9M23.2 13H27" stroke="#1a1a1a" stroke-width="1.3"/><path d="M11.5 9L17 13L11.5 17" stroke="#1a1a1a" stroke-width=".7" fill="none"/><circle cx="27.8" cy="21.9" r="6.2" fill="#fff" stroke="#1a1a1a" stroke-width="1.1"/><text x="27.8" y="25.099999999999998" font-size="8.8" font-weight="bold" text-anchor="middle" font-family="Liberation Sans" fill="#1a1a1a">3</text></svg>
<div class="t" style="left:55.5px;top:360px;font-size:12.2px;color:#2a2a2a">PG_splitter_g</div>
<svg style="left:199.5px;top:362px" width="14" height="9" viewBox="0 0 14 9"><path d="M1.5 1.5L7 7L12.5 1.5" stroke="#8a8a8a" stroke-width="1.9" fill="none"/></svg>
<div class="a" style="left:0;top:388px;width:223px;height:43px;border-bottom:1px solid #d8d8d8"></div>
<svg style="left:14px;top:396px" width="32" height="32" viewBox="0 0 32 32"><circle cx="14" cy="13" r="11.4" fill="#fff" stroke="#1a1a1a" stroke-width="1.1"/><path d="M11 2L14 5.5L17 2" fill="none" stroke="#1a1a1a" stroke-width="1"/><path d="M3 18L10.5 9L17.5 19L24 14" stroke="#1a1a1a" stroke-width="1.1" fill="none"/><circle cx="25.8" cy="21" r="6.2" fill="#fff" stroke="#1a1a1a" stroke-width="1.1"/><text x="25.8" y="24.2" font-size="8.8" font-weight="bold" text-anchor="middle" font-family="Liberation Sans" fill="#1a1a1a">2</text></svg>
<div class="t" style="left:55.5px;top:403px;font-size:12.2px;color:#2a2a2a">PG_htex_gg</div>
<svg style="left:199.5px;top:405px" width="14" height="9" viewBox="0 0 14 9"><path d="M1.5 1.5L7 7L12.5 1.5" stroke="#8a8a8a" stroke-width="1.9" fill="none"/></svg>
<div class="a" style="left:0;top:431px;width:223px;height:43px;border-bottom:1px solid #d8d8d8"></div>
<svg style="left:14px;top:439px" width="32" height="32" viewBox="0 0 32 32"><circle cx="14" cy="13" r="11.4" fill="#fff" stroke="#1a1a1a" stroke-width="1.1"/><path d="M11 2L14 5.5L17 2" fill="none" stroke="#1a1a1a" stroke-width="1"/><path d="M3 18L10.5 9L17.5 19L24 14" stroke="#a020a0" stroke-width="1.1" fill="none"/><circle cx="25.8" cy="21" r="6.2" fill="#fff" stroke="#1a1a1a" stroke-width="1.1"/><text x="25.8" y="24.2" font-size="8.8" font-weight="bold" text-anchor="middle" font-family="Liberation Sans" fill="#1a1a1a">2</text></svg>
<div class="t" style="left:55.5px;top:446px;font-size:12.2px;color:#2a2a2a">PG_htex_go</div>
<svg style="left:199.5px;top:448px" width="14" height="9" viewBox="0 0 14 9"><path d="M1.5 1.5L7 7L12.5 1.5" stroke="#8a8a8a" stroke-width="1.9" fill="none"/></svg>
<div class="a" style="left:0;top:474px;width:223px;height:43px;border-bottom:1px solid #d8d8d8"></div>
<svg style="left:14px;top:482px" width="32" height="32" viewBox="0 0 32 32"><circle cx="14" cy="13" r="11.4" fill="#fff" stroke="#1a1a1a" stroke-width="1.1"/><path d="M11 2L14 5.5L17 2" fill="none" stroke="#1a1a1a" stroke-width="1"/><path d="M3 18L10.5 9L17.5 19L24 14" stroke="#2030e0" stroke-width="1.1" fill="none"/><circle cx="25.8" cy="21" r="6.2" fill="#fff" stroke="#1a1a1a" stroke-width="1.1"/><text x="25.8" y="24.2" font-size="8.8" font-weight="bold" text-anchor="middle" font-family="Liberation Sans" fill="#1a1a1a">2</text></svg>
<div class="t" style="left:55.5px;top:489px;font-size:12.2px;color:#2a2a2a">PG_htex_gw</div>
<svg style="left:199.5px;top:491px" width="14" height="9" viewBox="0 0 14 9"><path d="M1.5 1.5L7 7L12.5 1.5" stroke="#8a8a8a" stroke-width="1.9" fill="none"/></svg>
<div class="a" style="left:0;top:517px;width:223px;height:43px;border-bottom:1px solid #d8d8d8"></div>
<svg style="left:16px;top:527px" width="32" height="32" viewBox="0 0 32 32"><path d="M1.5 1.5H21.5V13L11.5 19L1.5 13Z" fill="#fff" stroke="#1a1a1a" stroke-width="1.1"/><path d="M5 3V11H18V3M8 3L11.5 9L15 3" stroke="#1a1a1a" stroke-width=".9" fill="none"/><path d="M11.5 19V21" stroke="#2030e0" stroke-width="1"/></svg>
<div class="t" style="left:55.5px;top:532px;font-size:12.2px;color:#2a2a2a">PG_cond_gw</div>
<svg style="left:181px;top:531px" width="14" height="14" viewBox="0 0 14 14"><path d="M8 2.5H2.5V11.5H11.5V6" stroke="#bdbdbd" stroke-width="1.4" fill="none"/><path d="M8.5 5.5L12.5 1.5M9.5 1.5H12.5V4.5" stroke="#5a86d0" stroke-width="1" fill="none"/></svg>
<svg style="left:201px;top:532px" width="13" height="13" viewBox="0 0 13 13"><circle cx="6.5" cy="6.5" r="6" fill="#777"/><path d="M4.4 5A2.1 2.1 0 1 1 7.2 7C6.7 7.3 6.5 7.6 6.5 8.3" stroke="#fff" stroke-width="1.6" fill="none"/><circle cx="6.5" cy="10" r=".9" fill="#fff"/></svg>
<div class="a" style="left:0;top:560px;width:223px;height:43px;border-bottom:1px solid #d8d8d8"></div>
<svg style="left:15px;top:572px" width="32" height="32" viewBox="0 0 32 32"><path d="M6 1.5H20L24 5V30H2V5Z" fill="#fff" stroke="#1a1a1a" stroke-width="1.1"/></svg>
<div class="t" style="left:55.5px;top:575px;font-size:12.2px;color:#2a2a2a">PG_dryer</div>
<svg style="left:181px;top:574px" width="14" height="14" viewBox="0 0 14 14"><path d="M8 2.5H2.5V11.5H11.5V6" stroke="#bdbdbd" stroke-width="1.4" fill="none"/><path d="M8.5 5.5L12.5 1.5M9.5 1.5H12.5V4.5" stroke="#5a86d0" stroke-width="1" fill="none"/></svg>
<svg style="left:201px;top:575px" width="13" height="13" viewBox="0 0 13 13"><circle cx="6.5" cy="6.5" r="6" fill="#777"/><path d="M4.4 5A2.1 2.1 0 1 1 7.2 7C6.7 7.3 6.5 7.6 6.5 8.3" stroke="#fff" stroke-width="1.6" fill="none"/><circle cx="6.5" cy="10" r=".9" fill="#fff"/></svg>
<div class="a" style="left:223px;top:0;width:10px;height:585px;background:#f3f3f3"></div>
<svg style="left:225px;top:4px" width="8" height="5" viewBox="0 0 8 5"><path d="M0 5L4 0L8 5Z" fill="#c4c4c4"/></svg>
<svg style="left:225px;top:577px" width="8" height="5" viewBox="0 0 8 5"><path d="M0 0L4 5L8 0Z" fill="#c4c4c4"/></svg>
<div class="a" style="left:225px;top:13px;width:6px;height:96px;border-radius:3px;background:#bdbdbd"></div>
</div>
<div class="a" style="left:1px;top:862px;width:234px;height:32px;background:#f3f3f3;border:1px solid #d6d6d6;border-top:1px solid #d6d6d6"></div>
<svg style="left:11px;top:873px" width="14" height="11" viewBox="0 0 14 11"><rect x="3.5" y="1.5" width="7" height="7" stroke="#333" stroke-width="1.5" fill="none"/><path d="M0 5H3M11 5H14" stroke="#333" stroke-width="1.3"/></svg>
<div class="t" style="left:33.5px;top:872px;font-size:12.3px;color:#333">Gas _g Subsystems</div>
<svg style="left:212px;top:874px" width="13" height="8" viewBox="0 0 13 8"><path d="M1 1L6.5 6.5L12 1" stroke="#222" stroke-width="1.6" fill="none"/></svg>
<div class="a" style="left:1px;top:894px;width:234px;height:32px;background:#f3f3f3;border:1px solid #d6d6d6;border-top:none"></div>
<svg style="left:11px;top:905px" width="14" height="11" viewBox="0 0 14 11"><rect x="3.5" y="1.5" width="7" height="7" stroke="#333" stroke-width="1.5" fill="none"/><path d="M0 5H3M11 5H14" stroke="#333" stroke-width="1.3"/></svg>
<div class="t" style="left:33.5px;top:904px;font-size:12.3px;color:#333">Water _w Subsystems</div>
<svg style="left:212px;top:906px" width="13" height="8" viewBox="0 0 13 8"><path d="M1 1L6.5 6.5L12 1" stroke="#222" stroke-width="1.6" fill="none"/></svg>
<div class="a" style="left:1px;top:926px;width:234px;height:32px;background:#f3f3f3;border:1px solid #d6d6d6;border-top:none"></div>
<svg style="left:11px;top:937px" width="14" height="11" viewBox="0 0 14 11"><rect x="3.5" y="1.5" width="7" height="7" stroke="#333" stroke-width="1.5" fill="none"/><path d="M0 5H3M11 5H14" stroke="#333" stroke-width="1.3"/></svg>
<div class="t" style="left:33.5px;top:936px;font-size:12.3px;color:#333">Organic _o Subsystems</div>
<svg style="left:212px;top:938px" width="13" height="8" viewBox="0 0 13 8"><path d="M1 1L6.5 6.5L12 1" stroke="#222" stroke-width="1.6" fill="none"/></svg>
<div class="a" style="left:1px;top:958px;width:234px;height:32px;background:#f3f3f3;border:1px solid #d6d6d6;border-top:none"></div>
<svg style="left:11px;top:969px" width="14" height="11" viewBox="0 0 14 11"><rect x="3.5" y="1.5" width="7" height="7" stroke="#333" stroke-width="1.5" fill="none"/><path d="M0 5H3M11 5H14" stroke="#333" stroke-width="1.3"/></svg>
<div class="t" style="left:33.5px;top:968px;font-size:12.3px;color:#333">Solid Inorganic _s Subsystems</div>
<svg style="left:212px;top:970px" width="13" height="8" viewBox="0 0 13 8"><path d="M1 1L6.5 6.5L12 1" stroke="#222" stroke-width="1.6" fill="none"/></svg>
<div class="a" style="left:1px;top:990px;width:234px;height:32px;background:#f3f3f3;border:1px solid #d6d6d6;border-top:none"></div>
<svg style="left:11px;top:1001px" width="14" height="11" viewBox="0 0 14 11"><rect x="3.5" y="1.5" width="7" height="7" stroke="#333" stroke-width="1.5" fill="none"/><path d="M0 5H3M11 5H14" stroke="#333" stroke-width="1.3"/></svg>
<div class="t" style="left:33.5px;top:1000px;font-size:12.3px;color:#333">Machinery</div>
<svg style="left:212px;top:1002px" width="13" height="8" viewBox="0 0 13 8"><path d="M1 1L6.5 6.5L12 1" stroke="#222" stroke-width="1.6" fill="none"/></svg>
<div class="a" style="left:1px;top:1022px;width:234px;height:32px;background:#f3f3f3;border:1px solid #d6d6d6;border-top:none"></div>
<svg style="left:11px;top:1033px" width="14" height="11" viewBox="0 0 14 11"><rect x="3.5" y="1.5" width="7" height="7" stroke="#333" stroke-width="1.5" fill="none"/><path d="M0 5H3M11 5H14" stroke="#333" stroke-width="1.3"/></svg>
<div class="t" style="left:33.5px;top:1032px;font-size:12.3px;color:#333">Stream conversion</div>
<svg style="left:212px;top:1034px" width="13" height="8" viewBox="0 0 13 8"><path d="M1 1L6.5 6.5L12 1" stroke="#222" stroke-width="1.6" fill="none"/></svg>
<div class="a" style="left:0;top:1078px;width:1920px;height:2px;background:#e8f1f3"></div>
<svg style="left:8px;top:1058px" width="16" height="16" viewBox="0 0 16 16"><rect x="1" y="6" width="9" height="9" fill="#fff" stroke="#333" stroke-width="1.2"/><rect x="3.5" y="3.5" width="9" height="9" fill="#fff" stroke="#333" stroke-width="1.2"/><rect x="6" y="1" width="9" height="9" fill="#18b818" stroke="#333" stroke-width="1.2"/></svg>
<div class="t" style="left:30px;top:1060px;font-size:12.3px;color:#222">Default (0)</div>
<svg style="left:101px;top:1058px" width="14" height="15" viewBox="0 0 14 15"><path d="M2 10V2A1.5 1.5 0 0 1 5 2V10A2.3 2.3 0 1 1 2 10Z" stroke="#777" stroke-width="1" fill="none"/><path d="M6 14L7.5 9H12.5L14 14Z" fill="#777"/></svg>
<div class="t" style="left:117.5px;top:1060px;font-size:12.3px;color:#222">Standard</div>
<div class="a" style="left:1595px;top:187px;width:325px;height:867px;background:#f3f3f3"></div>
<div class="a" style="left:1600px;top:187px;width:320px;height:867px;background:#fff;border:1px solid #d6d6d6"></div>
<div class="a" style="left:1600px;top:187px;width:320px;height:29px;background:#f3f3f3;border:1px solid #d6d6d6"></div>
<div class="a" style="left:1628px;top:187px;width:1px;height:29px;background:#d6d6d6"></div>
<div class="a" style="left:1891px;top:187px;width:1px;height:29px;background:#d6d6d6"></div>
<svg style="left:1607px;top:195px" width="15" height="14" viewBox="0 0 15 14"><rect x="1" y="1.5" width="6" height="6" rx="1" stroke="#6a8fd8" stroke-width="1" fill="none"/><rect x="3.5" y="4" width="6" height="6" rx="1" stroke="#6a8fd8" stroke-width="1" fill="#f3f3f3"/><rect x="6" y="0.8" width="6" height="6" rx="1" stroke="#6a8fd8" stroke-width="1" fill="none"/><path d="M11 7.5V13.5M8 10.5H14" stroke="#2ca02c" stroke-width="1.8"/></svg>
<div class="t" style="left:1759.5px;top:195.5px;font-size:12.5px;color:#333;transform:translateX(-50%)">Object Manager</div>
<svg style="left:1898px;top:195px" width="13" height="13" viewBox="0 0 13 13"><circle cx="6.5" cy="6.5" r="6" fill="#4a78c8"/><path d="M4.4 5A2.1 2.1 0 1 1 7.2 7C6.7 7.3 6.5 7.6 6.5 8.3" stroke="#fff" stroke-width="1.6" fill="none"/><circle cx="6.5" cy="10" r=".9" fill="#fff"/></svg>
<div class="a" style="left:1601px;top:246px;width:318px;height:1px;background:#d6d6d6"></div>
<svg style="left:1610px;top:225px" width="14" height="13" viewBox="0 0 14 13"><circle cx="8.5" cy="5" r="4" stroke="#888" stroke-width="1.1" fill="none"/><path d="M5.6 7.9L1.5 12" stroke="#888" stroke-width="1.5"/></svg>
<div class="t" style="left:1629.5px;top:225px;font-size:12.3px;color:#8a8a8a">Search ...</div>
<svg style="left:1762px;top:225px" width="16" height="12" viewBox="0 0 16 12"><rect x="4" y="2" width="8" height="7" stroke="#707070" stroke-width="2" fill="none"/><path d="M0.5 5.5H4M12 5.5H15.5" stroke="#707070" stroke-width="1.3"/><path d="M0 5.5L2 3.5V7.5Z M16 5.5L14 3.5V7.5Z" fill="#707070"/></svg>
<svg style="left:1795px;top:224px" width="16" height="14" viewBox="0 0 16 14"><path d="M1 12H6V3H14" stroke="#707070" stroke-width="1.6" fill="none"/><path d="M16 3L13 1V5Z M0 12L2 10V14Z" fill="#707070"/></svg>
<svg style="left:1828px;top:223px" width="16" height="16" viewBox="0 0 16 16"><circle cx="8" cy="8" r="2.5" stroke="#707070" stroke-width="1.5" fill="none"/><path d="M1 1L5.5 5.5M15 1L10.5 5.5M1 15L5.5 10.5M15 15L10.5 10.5" stroke="#707070" stroke-width="1.3"/><path d="M2 5V2H5M14 5V2H11M2 11V14H5M14 11V14H11" stroke="#707070" stroke-width="1.2" fill="none"/></svg>
<svg style="left:1861px;top:223px" width="16" height="16" viewBox="0 0 16 16"><path d="M8 0.5V15.5M0.5 8H15.5" stroke="#707070" stroke-width="1.8"/></svg>
<svg style="left:1894px;top:224px" width="14" height="14" viewBox="0 0 14 14"><path d="M0.5 0.5H13.5V13.5H0.5ZM0.5 4.8H13.5M0.5 9.2H13.5M4.8 0.5V13.5M9.2 0.5V13.5" stroke="#707070" stroke-width="1.1" fill="none"/></svg>
<div class="a" style="left:1601px;top:247px;width:308px;height:27px;background:#f8f8f8;border-bottom:1px solid #dedede"></div>
<div class="a" style="left:1621px;top:247px;width:1px;height:779px;background:#e3e3e3"></div>
<div class="a" style="left:1765px;top:247px;width:1px;height:779px;background:#e3e3e3"></div>
<div class="t" style="left:1625.5px;top:253.5px;font-size:12.5px;font-weight:bold;color:#1a1a1a">Class</div>
<svg style="left:1748px;top:254px" width="10" height="11" viewBox="0 0 10 11"><path d="M5 10.5V1.5M1.5 5L5 1.5L8.5 5" stroke="#999" stroke-width="1.2" fill="none"/></svg>
<div class="t" style="left:1769.5px;top:253.5px;font-size:12.5px;font-weight:bold;color:#1a1a1a">Object</div>
<div class="a" style="left:1601px;top:274px;width:308px;height:752px;overflow:hidden">
<div class="a" style="left:0;top:26px;width:308px;height:1px;background:#e0e0e0"></div>
<svg style="left:3px;top:8px" width="15" height="10" viewBox="0 0 15 10"><rect x="4.2" y="1.7" width="6.6" height="6" stroke="#1a1a8c" stroke-width="2" fill="none"/><path d="M0.5 4.7H4M11 4.7H14.5" stroke="#1a1a8c" stroke-width="1.3"/><path d="M0 4.7L1.8 2.8V6.6Z M15 4.7L13.2 2.8V6.6Z" fill="#1a1a8c"/></svg>
<div class="t" style="left:24.5px;top:7px;font-size:12.4px;color:#2a2a2a">generator</div>
<div class="t" style="left:168.5px;top:7px;font-size:12.4px;color:#2a2a2a">generator001</div>
<div class="a" style="left:0;top:53px;width:308px;height:1px;background:#e0e0e0"></div>
<svg style="left:3px;top:35px" width="15" height="10" viewBox="0 0 15 10"><rect x="4.2" y="1.7" width="6.6" height="6" stroke="#1a1a8c" stroke-width="2" fill="none"/><path d="M0.5 4.7H4M11 4.7H14.5" stroke="#1a1a8c" stroke-width="1.3"/><path d="M0 4.7L1.8 2.8V6.6Z M15 4.7L13.2 2.8V6.6Z" fill="#1a1a8c"/></svg>
<div class="t" style="left:24.5px;top:34px;font-size:12.4px;color:#2a2a2a">motor</div>
<div class="t" style="left:168.5px;top:34px;font-size:12.4px;color:#2a2a2a">motor001</div>
<div class="a" style="left:0;top:80px;width:308px;height:1px;background:#e0e0e0"></div>
<svg style="left:3px;top:62px" width="15" height="10" viewBox="0 0 15 10"><rect x="4.2" y="1.7" width="6.6" height="6" stroke="#1a1a8c" stroke-width="2" fill="none"/><path d="M0.5 4.7H4M11 4.7H14.5" stroke="#1a1a8c" stroke-width="1.3"/><path d="M0 4.7L1.8 2.8V6.6Z M15 4.7L13.2 2.8V6.6Z" fill="#1a1a8c"/></svg>
<div class="t" style="left:24.5px;top:61px;font-size:12.4px;color:#2a2a2a">motor</div>
<div class="t" style="left:168.5px;top:61px;font-size:12.4px;color:#2a2a2a">motor002</div>
<div class="a" style="left:0;top:107px;width:308px;height:1px;background:#e0e0e0"></div>
<svg style="left:3px;top:89px" width="15" height="10" viewBox="0 0 15 10"><rect x="4.2" y="1.7" width="6.6" height="6" stroke="#1a1a8c" stroke-width="2" fill="none"/><path d="M0.5 4.7H4M11 4.7H14.5" stroke="#1a1a8c" stroke-width="1.3"/><path d="M0 4.7L1.8 2.8V6.6Z M15 4.7L13.2 2.8V6.6Z" fill="#1a1a8c"/></svg>
<div class="t" style="left:24.5px;top:88px;font-size:12.4px;color:#2a2a2a">motor</div>
<div class="t" style="left:168.5px;top:88px;font-size:12.4px;color:#2a2a2a">motor003</div>
<div class="a" style="left:0;top:134px;width:308px;height:1px;background:#e0e0e0"></div>
<svg style="left:3px;top:116px" width="15" height="10" viewBox="0 0 15 10"><rect x="4.2" y="1.7" width="6.6" height="6" stroke="#1a1a8c" stroke-width="2" fill="none"/><path d="M0.5 4.7H4M11 4.7H14.5" stroke="#1a1a8c" stroke-width="1.3"/><path d="M0 4.7L1.8 2.8V6.6Z M15 4.7L13.2 2.8V6.6Z" fill="#1a1a8c"/></svg>
<div class="t" style="left:24.5px;top:115px;font-size:12.4px;color:#2a2a2a">motor</div>
<div class="t" style="left:168.5px;top:115px;font-size:12.4px;color:#2a2a2a">motor004</div>
<div class="a" style="left:0;top:161px;width:308px;height:1px;background:#e0e0e0"></div>
<svg style="left:3px;top:143px" width="15" height="10" viewBox="0 0 15 10"><rect x="4.2" y="1.7" width="6.6" height="6" stroke="#1a1a8c" stroke-width="2" fill="none"/><path d="M0.5 4.7H4M11 4.7H14.5" stroke="#1a1a8c" stroke-width="1.3"/><path d="M0 4.7L1.8 2.8V6.6Z M15 4.7L13.2 2.8V6.6Z" fill="#1a1a8c"/></svg>
<div class="t" style="left:24.5px;top:142px;font-size:12.4px;color:#2a2a2a">motor</div>
<div class="t" style="left:168.5px;top:142px;font-size:12.4px;color:#2a2a2a">motor005</div>
<div class="a" style="left:0;top:188px;width:308px;height:1px;background:#e0e0e0"></div>
<svg style="left:3px;top:170px" width="15" height="10" viewBox="0 0 15 10"><rect x="4.2" y="1.7" width="6.6" height="6" stroke="#1a1a8c" stroke-width="2" fill="none"/><path d="M0.5 4.7H4M11 4.7H14.5" stroke="#1a1a8c" stroke-width="1.3"/><path d="M0 4.7L1.8 2.8V6.6Z M15 4.7L13.2 2.8V6.6Z" fill="#1a1a8c"/></svg>
<div class="t" style="left:24.5px;top:169px;font-size:12.4px;color:#2a2a2a">PG_comb_dfb</div>
<div class="t" style="left:168.5px;top:169px;font-size:12.4px;color:#2a2a2a">PG_comb_dfb001</div>
<div class="a" style="left:0;top:215px;width:308px;height:1px;background:#e0e0e0"></div>
<svg style="left:3px;top:197px" width="15" height="10" viewBox="0 0 15 10"><rect x="4.2" y="1.7" width="6.6" height="6" stroke="#1a1a8c" stroke-width="2" fill="none"/><path d="M0.5 4.7H4M11 4.7H14.5" stroke="#1a1a8c" stroke-width="1.3"/><path d="M0 4.7L1.8 2.8V6.6Z M15 4.7L13.2 2.8V6.6Z" fill="#1a1a8c"/></svg>
<div class="t" style="left:24.5px;top:196px;font-size:12.4px;color:#2a2a2a">PG_compr_g</div>
<div class="t" style="left:168.5px;top:196px;font-size:12.4px;color:#2a2a2a">PG_compr_g001</div>
<div class="a" style="left:0;top:242px;width:308px;height:1px;background:#e0e0e0"></div>
<svg style="left:3px;top:224px" width="15" height="10" viewBox="0 0 15 10"><rect x="4.2" y="1.7" width="6.6" height="6" stroke="#1a1a8c" stroke-width="2" fill="none"/><path d="M0.5 4.7H4M11 4.7H14.5" stroke="#1a1a8c" stroke-width="1.3"/><path d="M0 4.7L1.8 2.8V6.6Z M15 4.7L13.2 2.8V6.6Z" fill="#1a1a8c"/></svg>
<div class="t" style="left:24.5px;top:223px;font-size:12.4px;color:#2a2a2a">PG_compr_g</div>
<div class="t" style="left:168.5px;top:223px;font-size:12.4px;color:#2a2a2a">PG_compr_g001a</div>
<div class="a" style="left:0;top:269px;width:308px;height:1px;background:#e0e0e0"></div>
<svg style="left:3px;top:251px" width="15" height="10" viewBox="0 0 15 10"><rect x="4.2" y="1.7" width="6.6" height="6" stroke="#1a1a8c" stroke-width="2" fill="none"/><path d="M0.5 4.7H4M11 4.7H14.5" stroke="#1a1a8c" stroke-width="1.3"/><path d="M0 4.7L1.8 2.8V6.6Z M15 4.7L13.2 2.8V6.6Z" fill="#1a1a8c"/></svg>
<div class="t" style="left:24.5px;top:250px;font-size:12.4px;color:#2a2a2a">PG_compr_g</div>
<div class="t" style="left:168.5px;top:250px;font-size:12.4px;color:#2a2a2a">PG_compr_g002</div>
<div class="a" style="left:0;top:296px;width:308px;height:1px;background:#e0e0e0"></div>
<svg style="left:3px;top:278px" width="15" height="10" viewBox="0 0 15 10"><rect x="4.2" y="1.7" width="6.6" height="6" stroke="#1a1a8c" stroke-width="2" fill="none"/><path d="M0.5 4.7H4M11 4.7H14.5" stroke="#1a1a8c" stroke-width="1.3"/><path d="M0 4.7L1.8 2.8V6.6Z M15 4.7L13.2 2.8V6.6Z" fill="#1a1a8c"/></svg>
<div class="t" style="left:24.5px;top:277px;font-size:12.4px;color:#2a2a2a">PG_compr_g</div>
<div class="t" style="left:168.5px;top:277px;font-size:12.4px;color:#2a2a2a">PG_compr_g002a</div>
<div class="a" style="left:0;top:323px;width:308px;height:1px;background:#e0e0e0"></div>
<svg style="left:3px;top:305px" width="15" height="10" viewBox="0 0 15 10"><rect x="4.2" y="1.7" width="6.6" height="6" stroke="#1a1a8c" stroke-width="2" fill="none"/><path d="M0.5 4.7H4M11 4.7H14.5" stroke="#1a1a8c" stroke-width="1.3"/><path d="M0 4.7L1.8 2.8V6.6Z M15 4.7L13.2 2.8V6.6Z" fill="#1a1a8c"/></svg>
<div class="t" style="left:24.5px;top:304px;font-size:12.4px;color:#2a2a2a">PG_gasengine</div>
<div class="t" style="left:168.5px;top:304px;font-size:12.4px;color:#2a2a2a">PG_gasengine001</div>
<div class="a" style="left:0;top:350px;width:308px;height:1px;background:#e0e0e0"></div>
<svg style="left:3px;top:332px" width="15" height="10" viewBox="0 0 15 10"><rect x="4.2" y="1.7" width="6.6" height="6" stroke="#1a1a8c" stroke-width="2" fill="none"/><path d="M0.5 4.7H4M11 4.7H14.5" stroke="#1a1a8c" stroke-width="1.3"/><path d="M0 4.7L1.8 2.8V6.6Z M15 4.7L13.2 2.8V6.6Z" fill="#1a1a8c"/></svg>
<div class="t" style="left:24.5px;top:331px;font-size:12.4px;color:#2a2a2a">PG_gasif_dfb</div>
<div class="t" style="left:168.5px;top:331px;font-size:12.4px;color:#2a2a2a">PG_gasif_dfb001</div>
<div class="a" style="left:0;top:377px;width:308px;height:1px;background:#e0e0e0"></div>
<svg style="left:3px;top:359px" width="15" height="10" viewBox="0 0 15 10"><rect x="4.2" y="1.7" width="6.6" height="6" stroke="#1a1a8c" stroke-width="2" fill="none"/><path d="M0.5 4.7H4M11 4.7H14.5" stroke="#1a1a8c" stroke-width="1.3"/><path d="M0 4.7L1.8 2.8V6.6Z M15 4.7L13.2 2.8V6.6Z" fill="#1a1a8c"/></svg>
<div class="t" style="left:24.5px;top:358px;font-size:12.4px;color:#2a2a2a">PG_heat_source_w</div>
<div class="t" style="left:168.5px;top:358px;font-size:12.4px;color:#2a2a2a">PG_heat_source_w001</div>
<div class="a" style="left:0;top:404px;width:308px;height:1px;background:#e0e0e0"></div>
<svg style="left:3px;top:386px" width="15" height="10" viewBox="0 0 15 10"><rect x="4.2" y="1.7" width="6.6" height="6" stroke="#1a1a8c" stroke-width="2" fill="none"/><path d="M0.5 4.7H4M11 4.7H14.5" stroke="#1a1a8c" stroke-width="1.3"/><path d="M0 4.7L1.8 2.8V6.6Z M15 4.7L13.2 2.8V6.6Z" fill="#1a1a8c"/></svg>
<div class="t" style="left:24.5px;top:385px;font-size:12.4px;color:#2a2a2a">PG_htex_gg</div>
<div class="t" style="left:168.5px;top:385px;font-size:12.4px;color:#2a2a2a">PG_htex_gg001</div>
<div class="a" style="left:0;top:431px;width:308px;height:1px;background:#e0e0e0"></div>
<svg style="left:3px;top:413px" width="15" height="10" viewBox="0 0 15 10"><rect x="4.2" y="1.7" width="6.6" height="6" stroke="#1a1a8c" stroke-width="2" fill="none"/><path d="M0.5 4.7H4M11 4.7H14.5" stroke="#1a1a8c" stroke-width="1.3"/><path d="M0 4.7L1.8 2.8V6.6Z M15 4.7L13.2 2.8V6.6Z" fill="#1a1a8c"/></svg>
<div class="t" style="left:24.5px;top:412px;font-size:12.4px;color:#2a2a2a">PG_htex_gw</div>
<div class="t" style="left:168.5px;top:412px;font-size:12.4px;color:#2a2a2a">aftercooler</div>
<div class="a" style="left:0;top:458px;width:308px;height:1px;background:#e0e0e0"></div>
<svg style="left:3px;top:440px" width="15" height="10" viewBox="0 0 15 10"><rect x="4.2" y="1.7" width="6.6" height="6" stroke="#1a1a8c" stroke-width="2" fill="none"/><path d="M0.5 4.7H4M11 4.7H14.5" stroke="#1a1a8c" stroke-width="1.3"/><path d="M0 4.7L1.8 2.8V6.6Z M15 4.7L13.2 2.8V6.6Z" fill="#1a1a8c"/></svg>
<div class="t" style="left:24.5px;top:439px;font-size:12.4px;color:#2a2a2a">PG_htex_gw</div>
<div class="t" style="left:168.5px;top:439px;font-size:12.4px;color:#2a2a2a">PG_htex_gw001</div>
<div class="a" style="left:0;top:485px;width:308px;height:1px;background:#e0e0e0"></div>
<svg style="left:3px;top:467px" width="15" height="10" viewBox="0 0 15 10"><rect x="4.2" y="1.7" width="6.6" height="6" stroke="#1a1a8c" stroke-width="2" fill="none"/><path d="M0.5 4.7H4M11 4.7H14.5" stroke="#1a1a8c" stroke-width="1.3"/><path d="M0 4.7L1.8 2.8V6.6Z M15 4.7L13.2 2.8V6.6Z" fill="#1a1a8c"/></svg>
<div class="t" style="left:24.5px;top:466px;font-size:12.4px;color:#2a2a2a">PG_htex_gw</div>
<div class="t" style="left:168.5px;top:466px;font-size:12.4px;color:#2a2a2a">PG_htex_gw001a</div>
<div class="a" style="left:0;top:512px;width:308px;height:1px;background:#e0e0e0"></div>
<svg style="left:3px;top:494px" width="15" height="10" viewBox="0 0 15 10"><rect x="4.2" y="1.7" width="6.6" height="6" stroke="#1a1a8c" stroke-width="2" fill="none"/><path d="M0.5 4.7H4M11 4.7H14.5" stroke="#1a1a8c" stroke-width="1.3"/><path d="M0 4.7L1.8 2.8V6.6Z M15 4.7L13.2 2.8V6.6Z" fill="#1a1a8c"/></svg>
<div class="t" style="left:24.5px;top:493px;font-size:12.4px;color:#2a2a2a">PG_htex_wo</div>
<div class="t" style="left:168.5px;top:493px;font-size:12.4px;color:#2a2a2a">PG_htex_wo001</div>
<div class="a" style="left:0;top:539px;width:308px;height:1px;background:#e0e0e0"></div>
<svg style="left:3px;top:521px" width="15" height="10" viewBox="0 0 15 10"><rect x="4.2" y="1.7" width="6.6" height="6" stroke="#1a1a8c" stroke-width="2" fill="none"/><path d="M0.5 4.7H4M11 4.7H14.5" stroke="#1a1a8c" stroke-width="1.3"/><path d="M0 4.7L1.8 2.8V6.6Z M15 4.7L13.2 2.8V6.6Z" fill="#1a1a8c"/></svg>
<div class="t" style="left:24.5px;top:520px;font-size:12.4px;color:#2a2a2a">PG_mixer_g</div>
<div class="t" style="left:168.5px;top:520px;font-size:12.4px;color:#2a2a2a">PG_mixer_g001</div>
<div class="a" style="left:0;top:566px;width:308px;height:1px;background:#e0e0e0"></div>
<svg style="left:3px;top:548px" width="15" height="10" viewBox="0 0 15 10"><rect x="4.2" y="1.7" width="6.6" height="6" stroke="#1a1a8c" stroke-width="2" fill="none"/><path d="M0.5 4.7H4M11 4.7H14.5" stroke="#1a1a8c" stroke-width="1.3"/><path d="M0 4.7L1.8 2.8V6.6Z M15 4.7L13.2 2.8V6.6Z" fill="#1a1a8c"/></svg>
<div class="t" style="left:24.5px;top:547px;font-size:12.4px;color:#2a2a2a">PG_mixer_g</div>
<div class="t" style="left:168.5px;top:547px;font-size:12.4px;color:#2a2a2a">PG_mixer_g002</div>
<div class="a" style="left:0;top:593px;width:308px;height:1px;background:#e0e0e0"></div>
<svg style="left:3px;top:575px" width="15" height="10" viewBox="0 0 15 10"><rect x="4.2" y="1.7" width="6.6" height="6" stroke="#1a1a8c" stroke-width="2" fill="none"/><path d="M0.5 4.7H4M11 4.7H14.5" stroke="#1a1a8c" stroke-width="1.3"/><path d="M0 4.7L1.8 2.8V6.6Z M15 4.7L13.2 2.8V6.6Z" fill="#1a1a8c"/></svg>
<div class="t" style="left:24.5px;top:574px;font-size:12.4px;color:#2a2a2a">PG_mixer_o</div>
<div class="t" style="left:168.5px;top:574px;font-size:12.4px;color:#2a2a2a">PG_mixer_o001</div>
<div class="a" style="left:0;top:620px;width:308px;height:1px;background:#e0e0e0"></div>
<svg style="left:3px;top:602px" width="15" height="10" viewBox="0 0 15 10"><rect x="4.2" y="1.7" width="6.6" height="6" stroke="#1a1a8c" stroke-width="2" fill="none"/><path d="M0.5 4.7H4M11 4.7H14.5" stroke="#1a1a8c" stroke-width="1.3"/><path d="M0 4.7L1.8 2.8V6.6Z M15 4.7L13.2 2.8V6.6Z" fill="#1a1a8c"/></svg>
<div class="t" style="left:24.5px;top:601px;font-size:12.4px;color:#2a2a2a">PG_mixer_s</div>
<div class="t" style="left:168.5px;top:601px;font-size:12.4px;color:#2a2a2a">PG_mixer_s001</div>
<div class="a" style="left:0;top:647px;width:308px;height:1px;background:#e0e0e0"></div>
<svg style="left:3px;top:629px" width="15" height="10" viewBox="0 0 15 10"><rect x="4.2" y="1.7" width="6.6" height="6" stroke="#1a1a8c" stroke-width="2" fill="none"/><path d="M0.5 4.7H4M11 4.7H14.5" stroke="#1a1a8c" stroke-width="1.3"/><path d="M0 4.7L1.8 2.8V6.6Z M15 4.7L13.2 2.8V6.6Z" fill="#1a1a8c"/></svg>
<div class="t" style="left:24.5px;top:628px;font-size:12.4px;color:#2a2a2a">PG_mixer_s</div>
<div class="t" style="left:168.5px;top:628px;font-size:12.4px;color:#2a2a2a">PG_mixer_s002</div>
<div class="a" style="left:0;top:674px;width:308px;height:1px;background:#e0e0e0"></div>
<svg style="left:3px;top:656px" width="15" height="10" viewBox="0 0 15 10"><rect x="4.2" y="1.7" width="6.6" height="6" stroke="#1a1a8c" stroke-width="2" fill="none"/><path d="M0.5 4.7H4M11 4.7H14.5" stroke="#1a1a8c" stroke-width="1.3"/><path d="M0 4.7L1.8 2.8V6.6Z M15 4.7L13.2 2.8V6.6Z" fill="#1a1a8c"/></svg>
<div class="t" style="left:24.5px;top:655px;font-size:12.4px;color:#2a2a2a">PG_monitor_ambient</div>
<div class="t" style="left:168.5px;top:655px;font-size:12.4px;color:#2a2a2a">PG_monitor_ambient0...</div>
<div class="a" style="left:0;top:701px;width:308px;height:1px;background:#e0e0e0"></div>
<svg style="left:3px;top:683px" width="15" height="10" viewBox="0 0 15 10"><rect x="4.2" y="1.7" width="6.6" height="6" stroke="#1a1a8c" stroke-width="2" fill="none"/><path d="M0.5 4.7H4M11 4.7H14.5" stroke="#1a1a8c" stroke-width="1.3"/><path d="M0 4.7L1.8 2.8V6.6Z M15 4.7L13.2 2.8V6.6Z" fill="#1a1a8c"/></svg>
<div class="t" style="left:24.5px;top:682px;font-size:12.4px;color:#2a2a2a">PG_monitor_g</div>
<div class="t" style="left:168.5px;top:682px;font-size:12.4px;color:#2a2a2a">PG_monitor_g001</div>
<div class="a" style="left:0;top:728px;width:308px;height:1px;background:#e0e0e0"></div>
<svg style="left:3px;top:710px" width="15" height="10" viewBox="0 0 15 10"><rect x="4.2" y="1.7" width="6.6" height="6" stroke="#1a1a8c" stroke-width="2" fill="none"/><path d="M0.5 4.7H4M11 4.7H14.5" stroke="#1a1a8c" stroke-width="1.3"/><path d="M0 4.7L1.8 2.8V6.6Z M15 4.7L13.2 2.8V6.6Z" fill="#1a1a8c"/></svg>
<div class="t" style="left:24.5px;top:709px;font-size:12.4px;color:#2a2a2a">PG_monitor_g</div>
<div class="t" style="left:168.5px;top:709px;font-size:12.4px;color:#2a2a2a">PG_monitor_g001a</div>
<div class="a" style="left:0;top:755px;width:308px;height:1px;background:#e0e0e0"></div>
<svg style="left:3px;top:737px" width="15" height="10" viewBox="0 0 15 10"><rect x="4.2" y="1.7" width="6.6" height="6" stroke="#1a1a8c" stroke-width="2" fill="none"/><path d="M0.5 4.7H4M11 4.7H14.5" stroke="#1a1a8c" stroke-width="1.3"/><path d="M0 4.7L1.8 2.8V6.6Z M15 4.7L13.2 2.8V6.6Z" fill="#1a1a8c"/></svg>
<div class="t" style="left:24.5px;top:736px;font-size:12.4px;color:#2a2a2a">PG_monitor_g</div>
<div class="t" style="left:168.5px;top:736px;font-size:12.4px;color:#2a2a2a">PG_monitor_g001b</div>
</div>
<div class="a" style="left:1909px;top:247px;width:10px;height:779px;background:#f3f3f3"></div>
<svg style="left:1910px;top:251px" width="8" height="5" viewBox="0 0 8 5"><path d="M0 5L4 0L8 5Z" fill="#c8c8c8"/></svg>
<svg style="left:1910px;top:266px" width="8" height="5" viewBox="0 0 8 5"><path d="M0 0L4 5L8 0Z" fill="#c8c8c8"/></svg>
<svg style="left:1910px;top:279px" width="8" height="5" viewBox="0 0 8 5"><path d="M0 5L4 0L8 5Z" fill="#c8c8c8"/></svg>
<svg style="left:1910px;top:1017px" width="8" height="5" viewBox="0 0 8 5"><path d="M0 0L4 5L8 0Z" fill="#c8c8c8"/></svg>
<div class="a" style="left:1911px;top:286px;width:6px;height:115px;border-radius:3px;background:#bdbdbd"></div>
<div class="a" style="left:1601px;top:1026px;width:318px;height:27px;background:#f3f3f3;border-top:1px solid #d6d6d6"></div>
<div class="a" style="left:1706px;top:1027px;width:1px;height:26px;background:#d6d6d6"></div>
<div class="a" style="left:1817px;top:1027px;width:1px;height:26px;background:#d6d6d6"></div>
<div class="a" style="left:1913px;top:1027px;width:1px;height:26px;background:#d6d6d6"></div>
<div class="t" style="left:1607px;top:1034px;font-size:12.3px;font-weight:bold;color:#111">Object Manager</div>
<div class="t" style="left:1713px;top:1034px;font-size:12.6px;color:#222">Dataset Manager</div>
<div class="t" style="left:1824.5px;top:1034px;font-size:12.6px;color:#222">Chart Manager</div>
<div class="a" style="left:1644px;top:1056px;width:140px;height:20px;border:1.3px solid #2e9a3e;border-radius:3px;background:#fff"></div>
<svg style="left:1651px;top:1061px" width="11" height="9" viewBox="0 0 11 9"><path d="M1 4.5L4 7.5L10 1" stroke="#2e9a3e" stroke-width="1.5" fill="none"/></svg>
<div class="t" style="left:1667px;top:1059.5px;font-size:12.8px;color:#2e9a3e">No issues detected</div>
<div class="t" style="left:1792px;top:1061px;font-size:10px;letter-spacing:-0.12px;color:#333">IPSE GO v1.13.5 - PGP_Lib</div>
<div class="a" style="left:240px;top:187px;width:1355px;height:868px;border:1px solid #d6d6d6;background:#ececec"></div>
<div class="a" style="left:241px;top:188px;width:1353px;height:27px;background:#f3f3f3;border-bottom:1px solid #d6d6d6"></div>
<div class="a" style="left:432px;top:188px;width:1px;height:27px;background:#d6d6d6"></div>
<div class="t" style="left:247.5px;top:196px;font-size:12.1px;color:#222">Demo_DFB_Gasification_Power</div>
<div class="a" style="left:355px;top:237px;width:1125px;height:796px;background:#fff;box-shadow:3px 3px 6px rgba(0,0,0,0.25)"></div>
<div class="a" style="left:355px;top:237px;width:1125px;height:796px;background-color:#fff;background-image:linear-gradient(to right, rgba(255,255,255,0) 2px, #fff 2px),linear-gradient(to bottom, #f0f0f0 1px, #fff 1px);background-size:6px 6px;background-position:4px 3px"></div>
<svg style="left:0;top:0" width="1920" height="1080" viewBox="0 0 1920 1080">
<text x="382.5" y="283" font-size="17" fill="#f01414" font-family="Liberation Sans">Biomass DFB Gasification Power Plant</text>
<text x="382.5" y="302.6" font-size="10.2" text-anchor="start" fill="#1a1a1a" font-family="Liberation Sans" >Externally circulating dual fluidized bed gasification</text>
<text x="382.5" y="317.3" font-size="10.2" text-anchor="start" fill="#1a1a1a" font-family="Liberation Sans" >process. Includes product gas cleaning and cogeneration</text>
<text x="382.5" y="332.0" font-size="10.2" text-anchor="start" fill="#1a1a1a" font-family="Liberation Sans" >of heat and electric power.</text>
<rect x="380.5" y="351.5" width="211" height="18" fill="#c0c0c0"/>
<path d="M380.5,387.5 H591.5 M380.5,423.5 H591.5 M380.5,441.5 H591.5 M380.5,459.5 H591.5 M507.5,351.5 V459.5 M555.5,351.5 V459.5 M591.5,441.5 V459.5" stroke="#c8c8c8" stroke-width="1"/>
<path d="M380.5,459.5 V441.5" stroke="#c8c8c8" stroke-width="1"/>
<path d="M380.5,441.5 V351.5 H591.5 V441.5" stroke="#555" stroke-width="1" fill="none"/>
<path d="M507.5,351.5 V369.5 M555.5,351.5 V369.5" stroke="#d6d6d6" stroke-width="1"/>
<text x="383" y="363.3" font-size="11" text-anchor="start" fill="#111" font-family="Liberation Sans" font-weight="bold">Process Characteristics</text>
<text x="383" y="380.3" font-size="9.3" text-anchor="start" fill="#111" font-family="Liberation Sans" >P_th_fuel</text>
<text x="553.3" y="380.3" font-size="9.3" text-anchor="end" fill="#111" font-family="Liberation Sans" >8110.9</text>
<text x="573.5" y="380.3" font-size="9.3" text-anchor="middle" fill="#111" font-family="Liberation Sans" >[kW]</text>
<text x="383" y="398.3" font-size="9.3" text-anchor="start" fill="#111" font-family="Liberation Sans" >P_el gas engine</text>
<text x="553.3" y="398.3" font-size="9.3" text-anchor="end" fill="#111" font-family="Liberation Sans" >1950.8</text>
<text x="573.5" y="398.3" font-size="9.3" text-anchor="middle" fill="#111" font-family="Liberation Sans" >[kW]</text>
<text x="383" y="416.3" font-size="9.3" text-anchor="start" fill="#111" font-family="Liberation Sans" >P_el internal consumers</text>
<text x="553.3" y="416.3" font-size="9.3" text-anchor="end" fill="#111" font-family="Liberation Sans" >58.499</text>
<text x="573.5" y="416.3" font-size="9.3" text-anchor="middle" fill="#111" font-family="Liberation Sans" >[kW]</text>
<text x="383" y="434.3" font-size="9.3" text-anchor="start" fill="#111" font-family="Liberation Sans" >eta_el gross</text>
<text x="553.3" y="434.3" font-size="9.3" text-anchor="end" fill="#111" font-family="Liberation Sans" >24.051</text>
<text x="573.5" y="434.3" font-size="9.3" text-anchor="middle" fill="#111" font-family="Liberation Sans" >%</text>
<text x="383" y="452.3" font-size="9.3" text-anchor="start" fill="#111" font-family="Liberation Sans" >eta_el net</text>
<text x="553.3" y="452.3" font-size="9.3" text-anchor="end" fill="#111" font-family="Liberation Sans" >23.33</text>
<text x="573.5" y="452.3" font-size="9.3" text-anchor="middle" fill="#111" font-family="Liberation Sans" >%</text>
<path d="M403.8,671 L555.6,671" stroke="#808000" stroke-width="2" fill="none"/>
<path d="M579.7,665 L773,665 L773,643.3" stroke="#808080" stroke-width="2" fill="none"/>
<path d="M579.7,676.7 L597.5,676.7 L597.5,737 L790.3,737" stroke="#808080" stroke-width="2" fill="none"/>
<path d="M781.7,622.5 L802.5,622.5 L802.5,719.2" stroke="#808080" stroke-width="2" fill="none"/>
<path d="M623.3,616.7 L670,616.7 L670,665" stroke="#2828a8" stroke-width="1.2" fill="none"/>
<path d="M838.8,541.7 L838.8,574.2 L748.3,574.2 L748.3,737" stroke="#2828a8" stroke-width="1.2" fill="none"/>
<path d="M1086.3,920 L1086.3,948.3 L1158.3,948.3" stroke="#2828a8" stroke-width="1.2" fill="none"/>
<path d="M567.5,659 L567.5,526 L700,526" stroke="#ffff00" stroke-width="2" fill="none"/>
<path d="M724,526 L830,526" stroke="#ffff00" stroke-width="2" fill="none"/>
<path d="M848.3,514.5 L953.8,514.5 L953.8,622.8 L977.5,622.8" stroke="#ffff00" stroke-width="2" fill="none"/>
<path d="M989.5,583 L989.5,532.5 L1333.3,532.5 L1333.3,598.3" stroke="#ffff00" stroke-width="2" fill="none"/>
<path d="M1237,532 L1237,737 L815,737" stroke="#ffff00" stroke-width="2" fill="none"/>
<path d="M1309,525.8 L1309,466 L1460.3,466 L1460.3,785.5 L899.2,785.5" stroke="#80ff00" stroke-width="2" fill="none"/>
<path d="M840,785.5 L875,785.5" stroke="#80ff00" stroke-width="2" fill="none"/>
<path d="M802.8,743 L802.8,852 L505,852" stroke="#80ff00" stroke-width="2" fill="none"/>
<path d="M400,852 L485.8,852" stroke="#80ff00" stroke-width="2" fill="none"/>
<path d="M712.2,514 L712.2,460 L808.3,460" stroke="#0000ff" stroke-width="2" fill="none"/>
<path d="M712.2,538.3 L712.2,568.3 L625,568.3" stroke="#0000ff" stroke-width="2" fill="none"/>
<path d="M567.4,683.5 L567.4,749" stroke="#0000ff" stroke-width="2" fill="none"/>
<path d="M567.5,773.3 L567.5,785.3 L401.7,785.3" stroke="#0000ff" stroke-width="2" fill="none"/>
<path d="M989.5,677 L989.5,713.3 L1044,713.3" stroke="#0000ff" stroke-width="1.3" fill="none"/>
<path d="M1128.4,580 L1128.4,544.5 L1194.5,544.5" stroke="#0000ff" stroke-width="1.3" fill="none"/>
<path d="M1128.4,605 L1128.4,616.6 L1063.5,616.6" stroke="#0000ff" stroke-width="1.3" fill="none"/>
<path d="M1311.7,605 L1333,605" stroke="#0000ff" stroke-width="1.3" fill="none"/>
<path d="M1310,616.7 L1333,616.7" stroke="#0000ff" stroke-width="1.3" fill="none"/>
<path d="M1288.3,707.2 L1333.3,707.2" stroke="#0000ff" stroke-width="2" fill="none"/>
<path d="M1357.5,707.2 L1417.5,707.2" stroke="#0000ff" stroke-width="2" fill="none"/>
<path d="M917.2,894 L917.2,864.2 L995.8,864.2" stroke="#0000ff" stroke-width="2" fill="none"/>
<path d="M917.5,918.8 L917.5,948.4 L850,948.4" stroke="#0000ff" stroke-width="2" fill="none"/>
<path d="M989.5,592.8 L1115.8,592.8" stroke="#800080" stroke-width="2" fill="none"/>
<path d="M1140.8,592.8 L1158.7,592.8 L1158.7,664.8 L999,664.8" stroke="#800080" stroke-width="2" fill="none"/>
<path d="M1020.8,574.7 L1080,574.7 L1080,592.8" stroke="#800080" stroke-width="2" fill="none"/>
<path d="M989.5,632.5 L989.5,661.7" stroke="#800080" stroke-width="2" fill="none"/>
<path d="M1104.2,664.8 L1104.2,725 L815,725" stroke="#800080" stroke-width="2" fill="none"/>
<path d="M772.5,613 L772.5,599.2 L886.7,599.2 L886.7,773.3" stroke="#ff8000" stroke-width="2" fill="none"/>
<path d="M887.2,797.5 L887.2,906.3 L1077.5,906.3" stroke="#ff8000" stroke-width="2" fill="none"/>
<path d="M1096,894.5 L1436.7,894.5" stroke="#ff8000" stroke-width="2" fill="none"/>
<path d="M1345.3,628.3 L1345.3,894.5" stroke="#ff8000" stroke-width="2" fill="none"/>
<path d="M1038,650 L1038,657" stroke="#000" stroke-width="1.5" fill="none"/>
<path d="M1279.5,517 L1279.5,523" stroke="#000" stroke-width="1.5" fill="none"/>
<path d="M495.3,831 L495.3,843" stroke="#000" stroke-width="1.5" fill="none"/>
<path d="M1218.7,879.3 L1218.7,885" stroke="#000" stroke-width="1.5" fill="none"/>
<path d="M1246,634.7 L1252,634.7" stroke="#000" stroke-width="1.5" fill="none"/>
<path d="M1345.8,610.8 L1354.2,610.8" stroke="#000" stroke-width="1.5" fill="none"/>
<rect x="597" y="524.5" width="12" height="3" fill="#fff"/><path d="M597,526 H609" stroke="#333" stroke-width="1"/>
<rect x="621" y="524.5" width="12" height="3" fill="#fff"/><path d="M621,526 H633" stroke="#333" stroke-width="1"/>
<rect x="645" y="524.5" width="13" height="3" fill="#fff"/><path d="M645,526 H658" stroke="#333" stroke-width="1"/>
<rect x="670" y="524.5" width="12" height="3" fill="#fff"/><path d="M670,526 H682" stroke="#333" stroke-width="1"/>
<rect x="869" y="513.0" width="12" height="3" fill="#fff"/><path d="M869,514.5 H881" stroke="#333" stroke-width="1"/>
<rect x="983.3" y="904.8" width="12.5" height="3" fill="#fff"/><path d="M983.3,906.3 H995.8" stroke="#333" stroke-width="1"/>
<rect x="483.4" y="669.5" width="12.100000000000023" height="3" fill="#fff"/><path d="M483.4,671 H495.5" stroke="#c070c0" stroke-width="1"/>
<rect x="513.6" y="669.5" width="12.100000000000023" height="3" fill="#fff"/><path d="M513.6,671 H525.7" stroke="#c070c0" stroke-width="1"/>
<rect x="1030" y="573.2" width="12" height="3" fill="#fff"/><path d="M1030,574.7 H1042" stroke="#a040a0" stroke-width="1"/>
<rect x="1048" y="573.2" width="12" height="3" fill="#fff"/><path d="M1048,574.7 H1060" stroke="#a040a0" stroke-width="1"/>
<rect x="621.7" y="663.5" width="12.299999999999955" height="3" fill="#fff"/><path d="M621.7,665 H634" stroke="#3030a0" stroke-width="1"/>
<rect x="480.9" y="668.5" width="5" height="5" fill="#800080"/>
<rect x="493.5" y="669.0" width="4" height="4" fill="#fff" stroke="#c080c0" stroke-width="1"/>
<rect x="511.1" y="668.5" width="5" height="5" fill="#800080"/>
<rect x="523.7" y="669.0" width="4" height="4" fill="#fff" stroke="#c080c0" stroke-width="1"/>
<rect x="553.1" y="668.5" width="5" height="5" fill="#800080"/>
<rect x="555.6" y="658.9" width="24" height="24.6" fill="#fff" stroke="#222" stroke-width="1.1"/>
<circle cx="567.5" cy="671" r="6.3" stroke="#000" stroke-width="1.1" fill="#fff"/>
<rect x="790.3" y="719.2" width="24.7" height="24.1" fill="#fff" stroke="#222" stroke-width="1.1"/>
<circle cx="802.5" cy="731" r="7" stroke="#000" stroke-width="1.1" fill="#fff"/>
<path d="M797,725.5 L808,736.5 M808,725.5 L797,736.5" stroke="#222" stroke-width="1"/>
<path d="M763.3,613.3 H781.7 V633 L775,641.7 H770 L763.3,633 Z" fill="#fff" stroke="#222" stroke-width="1"/>
<circle cx="772.5" cy="627" r="5.5" stroke="#000" stroke-width="0.9" fill="#fff"/>
<g transform="translate(0,0)"><path d="M829.6,517.4 V532 L836.5,539.4 H841.5 L848.3,532 V517.4 Z" fill="#fff"/><path d="M829.6,511.2 H848.3" stroke="#222" stroke-width="1"/><path d="M829.6,511.2 V532 L836.5,539.4 M848.3,511.2 V532 L841.5,539.4" stroke="#333" stroke-width="1" fill="none"/><path d="M829.6,517.4 H836 V532.4 H842.3 V517.4 H848.3" stroke="#999" stroke-width="0.9" fill="none"/><rect x="836.6" y="539.3" width="4.6" height="4.4" fill="#fff" stroke="#6a6ad0" stroke-width="0.8"/></g>
<g transform="translate(247.4,380.1)"><path d="M829.6,517.4 V532 L836.5,539.4 H841.5 L848.3,532 V517.4 Z" fill="#fff"/><path d="M829.6,511.2 H848.3" stroke="#222" stroke-width="1"/><path d="M829.6,511.2 V532 L836.5,539.4 M848.3,511.2 V532 L841.5,539.4" stroke="#333" stroke-width="1" fill="none"/><path d="M829.6,517.4 H836 V532.4 H842.3 V517.4 H848.3" stroke="#999" stroke-width="0.9" fill="none"/><rect x="836.6" y="539.3" width="4.6" height="4.4" fill="#fff" stroke="#6a6ad0" stroke-width="0.8"/></g>
<path d="M977.5,591 Q977.5,583.3 989.5,583.3 Q1001.7,583.3 1001.7,591 V625 Q1001.7,632.5 989.5,632.5 Q977.5,632.5 977.5,625 Z" fill="#fff" stroke="#222" stroke-width="1.1"/>
<path d="M977.5,598.7 H1001.7 M977.5,619.7 H1001.7 M977.5,598.7 L1001.7,619.7 M1001.7,598.7 L977.5,619.7" stroke="#222" stroke-width="1"/>
<path d="M980,670 V664 Q980,661.7 982.5,661.7 H996.5 Q999,661.7 999,664 V670" fill="#fff" stroke="#b050b0" stroke-width="1"/>
<path d="M980,670 V675 Q980,677.5 982.5,677.5 H996.5 Q999,677.5 999,675 V670 Z" fill="#fff" stroke="#5050ff" stroke-width="1"/>
<rect x="987.0" y="660.0" width="5" height="5" fill="#800080"/>
<circle cx="712.2" cy="526" r="12" stroke="#000" stroke-width="1.1" fill="#fff"/>
<path d="M712.2,514 L711.2,520 L718.2,524 L706.2,530 L712.2,538" stroke="#0000ff" stroke-width="1.2" fill="none"/>
<circle cx="1128.4" cy="592.7" r="12.3" stroke="#0000ff" stroke-width="1.1" fill="#fff"/>
<path d="M1116.1000000000001,592.7 L1122.4,590.7 L1126.4,584.7 L1131.4,598.7 L1140.7,592.7" stroke="#800080" stroke-width="1.2" fill="none"/>
<circle cx="887.2" cy="785.5" r="12" stroke="#000" stroke-width="1.1" fill="#fff"/>
<path d="M875.2,785.5 L881.2,783.5 L885.2,777.5 L890.2,791.5 L899.2,785.5" stroke="#000" stroke-width="1.2" fill="none"/>
<circle cx="917.5" cy="906.3" r="12.5" stroke="#000" stroke-width="1.1" fill="#fff"/>
<path d="M917.5,893.8 L916.5,899.8 L923.5,904.3 L911.5,910.3 L917.5,918.8" stroke="#0000ff" stroke-width="1.2" fill="none"/>
<circle cx="1345.3" cy="707.2" r="12" stroke="#000" stroke-width="1.1" fill="#fff"/>
<path d="M1333.3,707.2 L1339.3,705.2 L1343.3,699.2 L1348.3,713.2 L1357.3,707.2" stroke="#0000ff" stroke-width="1.2" fill="none"/>
<circle cx="567.5" cy="761.3" r="12" stroke="#0000ff" stroke-width="1.2" fill="#fff"/>
<path d="M557,755.5 H574 L561.5,760 L574,764.5 L561.5,768.5 H574" stroke="#2030e0" stroke-width="1" fill="none"/>
<ellipse cx="550.3" cy="754.7" rx="4.6" ry="3.6" stroke="#2030e0" stroke-width="0.9" fill="none"/><path d="M545,762 H555 M551.5,759 L555,762 L551.5,765" stroke="#2030e0" stroke-width="0.9" fill="none"/>
<circle cx="1038" cy="640.8" r="9.3" stroke="#000" stroke-width="1.1" fill="#fff"/>
<path d="M1043,636.8 L1033,636.8 L1041,640.8 L1033,644.8 L1043,644.8" stroke="#000" stroke-width="1" fill="none"/>
<rect x="1036.0" y="629.5" width="4" height="4" fill="#0000ff"/>
<circle cx="1038" cy="664.8" r="7.5" stroke="#b070b0" stroke-width="1" fill="#fff" stroke-dasharray="2 1.5"/>
<circle cx="1279.5" cy="507.8" r="9.3" stroke="#000" stroke-width="1.1" fill="#fff"/>
<path d="M1284.5,503.8 L1274.5,503.8 L1282.5,507.8 L1274.5,511.8 L1284.5,511.8" stroke="#000" stroke-width="1" fill="none"/>
<rect x="1277.5" y="496.5" width="4" height="4" fill="#0000ff"/>
<circle cx="1279.5" cy="532" r="9.5" stroke="#000" stroke-width="1.1" fill="#fff"/>
<path d="M1271.0,530 L1288.0,526 M1271.0,534 L1288.0,538" stroke="#000" stroke-width="1" fill="none"/>
<circle cx="495.3" cy="821.7" r="9.3" stroke="#000" stroke-width="1.1" fill="#fff"/>
<path d="M500.3,817.7 L490.3,817.7 L498.3,821.7 L490.3,825.7 L500.3,825.7" stroke="#000" stroke-width="1" fill="none"/>
<rect x="493.3" y="810.4000000000001" width="4" height="4" fill="#0000ff"/>
<circle cx="495.3" cy="852" r="9.5" stroke="#000" stroke-width="1.1" fill="#fff"/>
<path d="M486.8,850 L503.8,846 M486.8,854 L503.8,858" stroke="#000" stroke-width="1" fill="none"/>
<circle cx="1218.7" cy="870" r="9.3" stroke="#000" stroke-width="1.1" fill="#fff"/>
<path d="M1223.7,866 L1213.7,866 L1221.7,870 L1213.7,874 L1223.7,874" stroke="#000" stroke-width="1" fill="none"/>
<rect x="1216.7" y="858.7" width="4" height="4" fill="#0000ff"/>
<circle cx="1218.7" cy="894.5" r="9.5" stroke="#000" stroke-width="1.1" fill="#fff"/>
<path d="M1210.2,892.5 L1227.2,888.5 M1210.2,896.5 L1227.2,900.5" stroke="#000" stroke-width="1" fill="none"/>
<circle cx="1237" cy="634.7" r="9" stroke="#000" stroke-width="1.1" fill="#fff"/>
<path d="M1230.5,629 L1234,642.5 M1243.5,629 L1240,642.5" stroke="#222" stroke-width="1"/>
<circle cx="1261.2" cy="634.7" r="9.3" stroke="#000" stroke-width="1.1" fill="#fff"/>
<path d="M1257.2,639.7 V629.7 L1261.2,637.7 L1265.2,629.7 V639.7" stroke="#000" stroke-width="1" fill="none"/>
<circle cx="1363.7" cy="610.8" r="9.5" stroke="#000" stroke-width="1.1" fill="#fff"/>
<text x="1363.7" y="614.5" font-size="11" text-anchor="middle" fill="#111" font-family="Liberation Sans" >G</text>
<path d="M1363.7,601 V588 M1356,596 L1370,593 M1356,592 L1370,589 M1356,588 L1370,585" stroke="#222" stroke-width="1"/>
<path d="M1333.3,598 L1345.8,592.5 V628.3 L1333.3,622 Z" fill="#fff" stroke="#222" stroke-width="1"/>
<path d="M1339,604 V617" stroke="#222" stroke-width="1"/>
<path d="M1441.7,836.7 H1454.5 L1460.5,903 H1436.2 Z" fill="#fff" stroke="#222" stroke-width="1"/>
<rect x="1233" y="528" width="8" height="8" fill="#fff" stroke="#111" stroke-width="1.2"/>
<rect x="1305" y="528" width="8" height="8" fill="#fff" stroke="#111" stroke-width="1.2"/>
<rect x="1341.5" y="890.2" width="8" height="8" fill="#fff" stroke="#111" stroke-width="1.2"/>
<rect x="744.3" y="733" width="8" height="8" fill="#fff" stroke="#111" stroke-width="1.2"/>
<rect x="666" y="661" width="8" height="8" fill="#fff" stroke="#111" stroke-width="1.2"/>
<rect x="1076" y="588.8" width="8" height="8" fill="#fff" stroke="#a060a0" stroke-width="1"/>
<rect x="1100.2" y="660.8" width="8" height="8" fill="#fff" stroke="#a060a0" stroke-width="1"/>
<path d="M380.4,666.5 H393.27 V662 L403.8,671 L393.27,680 V675.5 H380.4 Z" fill="#fff" stroke="#a030a0" stroke-width="1.1"/>
<text x="390.6" y="673.3" font-size="6.3" text-anchor="middle" fill="#a030a0" font-family="Liberation Sans" letter-spacing="-0.2">ORG</text>
<path d="M603,563.8 H615.1 V559.3 L625,568.3 L615.1,577.3 V572.8 H603 Z" fill="#fff" stroke="#3040f0" stroke-width="1.1"/>
<text x="612.5" y="570.5999999999999" font-size="6.3" text-anchor="middle" fill="#3040f0" font-family="Liberation Sans" letter-spacing="-0.2">WAT</text>
<path d="M808.3,455.5 H820.235 V451 L830,460 L820.235,469 V464.5 H808.3 Z" fill="#fff" stroke="#3040f0" stroke-width="1.1"/>
<text x="817.65" y="462.3" font-size="6.3" text-anchor="middle" fill="#3040f0" font-family="Liberation Sans" letter-spacing="-0.2">WAT</text>
<path d="M603.3,612.2 H614.3 V607.7 L623.3,616.7 L614.3,625.7 V621.2 H603.3 Z" fill="#fff" stroke="#3838b0" stroke-width="1.1"/>
<text x="611.8" y="619.0" font-size="6.3" text-anchor="middle" fill="#3838b0" font-family="Liberation Sans" letter-spacing="-0.2">SOL</text>
<path d="M380,780.8 H391.935 V776.3 L401.7,785.3 L391.935,794.3 V789.8 H380 Z" fill="#fff" stroke="#3040f0" stroke-width="1.1"/>
<text x="389.35" y="787.5999999999999" font-size="6.3" text-anchor="middle" fill="#3040f0" font-family="Liberation Sans" letter-spacing="-0.2">WAT</text>
<path d="M380,847.5 H391.0 V843 L400,852 L391.0,861 V856.5 H380 Z" fill="#fff" stroke="#222" stroke-width="1.1"/>
<text x="388.5" y="854.3" font-size="6.3" text-anchor="middle" fill="#222" font-family="Liberation Sans" letter-spacing="-0.2">AMB</text>
<path d="M820.8,781.0 H831.36 V776.5 L840,785.5 L831.36,794.5 V790.0 H820.8 Z" fill="#fff" stroke="#222" stroke-width="1.1"/>
<text x="828.9" y="787.8" font-size="6.3" text-anchor="middle" fill="#222" font-family="Liberation Sans" letter-spacing="-0.2">AMB</text>
<path d="M995.8,859.7 H1007.295 V855.2 L1016.7,864.2 L1007.295,873.2 V868.7 H995.8 Z" fill="#fff" stroke="#3040f0" stroke-width="1.1"/>
<text x="1004.75" y="866.5" font-size="6.3" text-anchor="middle" fill="#3040f0" font-family="Liberation Sans" letter-spacing="-0.2">WAT</text>
<path d="M826.3,943.9 H836.915 V939.4 L845.6,948.4 L836.915,957.4 V952.9 H826.3 Z" fill="#fff" stroke="#3040f0" stroke-width="1.1"/>
<text x="834.45" y="950.6999999999999" font-size="6.3" text-anchor="middle" fill="#3040f0" font-family="Liberation Sans" letter-spacing="-0.2">WAT</text>
<path d="M1158.3,943.8 H1170.235 V939.3 L1180,948.3 L1170.235,957.3 V952.8 H1158.3 Z" fill="#fff" stroke="#3838b0" stroke-width="1.1"/>
<text x="1167.65" y="950.5999999999999" font-size="6.3" text-anchor="middle" fill="#3838b0" font-family="Liberation Sans" letter-spacing="-0.2">SOL</text>
<path d="M1001.6,570.2 H1012.105 V565.7 L1020.7,574.7 L1012.105,583.7 V579.2 H1001.6 Z" fill="#fff" stroke="#a030a0" stroke-width="1.1"/>
<text x="1009.6500000000001" y="577.0" font-size="6.3" text-anchor="middle" fill="#a030a0" font-family="Liberation Sans" letter-spacing="-0.2">ORG</text>
<path d="M1043.8,612.1 H1054.635 V607.6 L1063.5,616.6 L1054.635,625.6 V621.1 H1043.8 Z" fill="#fff" stroke="#3040f0" stroke-width="1.1"/>
<text x="1052.15" y="618.9" font-size="6.3" text-anchor="middle" fill="#3040f0" font-family="Liberation Sans" letter-spacing="-0.2">WAT</text>
<path d="M1044,708.8 H1055.55 V704.3 L1065,713.3 L1055.55,722.3 V717.8 H1044 Z" fill="#fff" stroke="#3040f0" stroke-width="1.1"/>
<text x="1053.0" y="715.5999999999999" font-size="6.3" text-anchor="middle" fill="#3040f0" font-family="Liberation Sans" letter-spacing="-0.2">WAT</text>
<path d="M1194.5,540.0 H1206.27 V535.5 L1215.9,544.5 L1206.27,553.5 V549.0 H1194.5 Z" fill="#fff" stroke="#3040f0" stroke-width="1.1"/>
<text x="1203.7" y="546.8" font-size="6.3" text-anchor="middle" fill="#3040f0" font-family="Liberation Sans" letter-spacing="-0.2">WAT</text>
<path d="M1291.7,600.5 H1302.7 V596 L1311.7,605 L1302.7,614 V609.5 H1291.7 Z" fill="#fff" stroke="#3040f0" stroke-width="1.1"/>
<text x="1300.2" y="607.3" font-size="6.3" text-anchor="middle" fill="#3040f0" font-family="Liberation Sans" letter-spacing="-0.2">WAT</text>
<path d="M1310,612.2 H1298.065 V607.7 L1288.3,616.7 L1298.065,625.7 V621.2 H1310 Z" fill="#fff" stroke="#3040f0" stroke-width="1.1"/>
<text x="1299.15" y="619.0" font-size="6.3" text-anchor="middle" fill="#3040f0" font-family="Liberation Sans" letter-spacing="-0.2">DWM</text>
<path d="M1267.5,702.7 H1278.94 V698.2 L1288.3,707.2 L1278.94,716.2 V711.7 H1267.5 Z" fill="#fff" stroke="#3040f0" stroke-width="1.1"/>
<text x="1276.4" y="709.5" font-size="6.3" text-anchor="middle" fill="#3040f0" font-family="Liberation Sans" letter-spacing="-0.2">WAT</text>
<path d="M1417.5,702.7 H1429.435 V698.2 L1439.2,707.2 L1429.435,716.2 V711.7 H1417.5 Z" fill="#fff" stroke="#3040f0" stroke-width="1.1"/>
<text x="1426.85" y="709.5" font-size="6.3" text-anchor="middle" fill="#3040f0" font-family="Liberation Sans" letter-spacing="-0.2">WAT</text>
<rect x="377.2" y="888" width="18.6" height="12.5" rx="1.5" fill="#fff" stroke="#222" stroke-width="1.1"/>
<text x="386.5" y="897" font-size="6.3" text-anchor="middle" fill="#222" font-family="Liberation Sans" >AMB</text>
<rect x="594.5" y="523.5" width="5" height="5" fill="#20d020"/>
<rect x="607.0" y="524.0" width="4" height="4" fill="#fff" stroke="#60e060" stroke-width="1"/>
<rect x="618.5" y="523.5" width="5" height="5" fill="#20d020"/>
<rect x="631.0" y="524.0" width="4" height="4" fill="#fff" stroke="#60e060" stroke-width="1"/>
<rect x="642.5" y="523.5" width="5" height="5" fill="#20d020"/>
<rect x="656.0" y="524.0" width="4" height="4" fill="#fff" stroke="#60e060" stroke-width="1"/>
<rect x="667.5" y="523.5" width="5" height="5" fill="#20d020"/>
<rect x="680.0" y="524.0" width="4" height="4" fill="#fff" stroke="#60e060" stroke-width="1"/>
<rect x="695.5" y="523.5" width="5" height="5" fill="#20d020"/>
<rect x="722.0" y="524.0" width="4" height="4" fill="#fff" stroke="#60e060" stroke-width="1"/>
<rect x="827.5" y="523.5" width="5" height="5" fill="#20d020"/>
<rect x="846.0" y="512.5" width="4" height="4" fill="#fff" stroke="#60e060" stroke-width="1"/>
<rect x="866.5" y="512.0" width="5" height="5" fill="#20d020"/>
<rect x="879.0" y="512.5" width="4" height="4" fill="#fff" stroke="#60e060" stroke-width="1"/>
<rect x="975.0" y="620.3" width="5" height="5" fill="#20d020"/>
<rect x="987.5" y="581.0" width="4" height="4" fill="#fff" stroke="#60e060" stroke-width="1"/>
<rect x="1230.5" y="529.5" width="5" height="5" fill="#20d020"/>
<rect x="1239.0" y="530.0" width="4" height="4" fill="#fff" stroke="#60e060" stroke-width="1"/>
<rect x="1267.5" y="529.5" width="5" height="5" fill="#20d020"/>
<rect x="1287.0" y="530.0" width="4" height="4" fill="#fff" stroke="#60e060" stroke-width="1"/>
<rect x="1302.5" y="529.5" width="5" height="5" fill="#20d020"/>
<rect x="1311.0" y="530.0" width="4" height="4" fill="#fff" stroke="#60e060" stroke-width="1"/>
<rect x="1306.5" y="523.5" width="5" height="5" fill="#20d020"/>
<rect x="1234.5" y="622.5" width="5" height="5" fill="#20d020"/>
<rect x="1235.0" y="642.0" width="4" height="4" fill="#fff" stroke="#60e060" stroke-width="1"/>
<rect x="1330.8" y="595.8" width="5" height="5" fill="#20d020"/>
<rect x="1343.3" y="626.3" width="4" height="4" fill="#fff" stroke="#60e060" stroke-width="1"/>
<rect x="1342.8" y="692.5" width="5" height="5" fill="#20d020"/>
<rect x="1343.3" y="717.5" width="4" height="4" fill="#fff" stroke="#60e060" stroke-width="1"/>
<rect x="1458.3" y="783.5" width="4" height="4" fill="#fff" stroke="#60e060" stroke-width="1"/>
<rect x="812.5" y="734.5" width="5" height="5" fill="#20d020"/>
<rect x="800.3" y="740.5" width="5" height="5" fill="#20d020"/>
<rect x="503.0" y="850.0" width="4" height="4" fill="#fff" stroke="#60e060" stroke-width="1"/>
<rect x="483.3" y="849.5" width="5" height="5" fill="#20d020"/>
<rect x="398.0" y="850.0" width="4" height="4" fill="#fff" stroke="#60e060" stroke-width="1"/>
<rect x="872.5" y="783.0" width="5" height="5" fill="#20d020"/>
<rect x="897.2" y="783.5" width="4" height="4" fill="#fff" stroke="#60e060" stroke-width="1"/>
<rect x="884.7" y="770.8" width="5" height="5" fill="#20d020"/>
<rect x="885.2" y="795.5" width="4" height="4" fill="#fff" stroke="#60e060" stroke-width="1"/>
<rect x="838.0" y="783.5" width="4" height="4" fill="#fff" stroke="#60e060" stroke-width="1"/>
<rect x="902.5" y="903.8" width="5" height="5" fill="#20d020"/>
<rect x="928.0" y="904.3" width="4" height="4" fill="#fff" stroke="#60e060" stroke-width="1"/>
<rect x="1075.0" y="903.8" width="5" height="5" fill="#20d020"/>
<rect x="1094.0" y="892.5" width="4" height="4" fill="#fff" stroke="#60e060" stroke-width="1"/>
<rect x="1206.5" y="892.0" width="5" height="5" fill="#20d020"/>
<rect x="1226.0" y="892.5" width="4" height="4" fill="#fff" stroke="#60e060" stroke-width="1"/>
<rect x="1339.5" y="892.0" width="5" height="5" fill="#20d020"/>
<rect x="1347.0" y="892.5" width="4" height="4" fill="#fff" stroke="#60e060" stroke-width="1"/>
<rect x="1434.2" y="892.0" width="5" height="5" fill="#20d020"/>
<rect x="1343.0" y="886.5" width="5" height="5" fill="#20d020"/>
<rect x="565.5" y="657.0" width="4" height="4" fill="#fff" stroke="#60e060" stroke-width="1"/>
<rect x="565.0" y="681.0" width="5" height="5" fill="#20d020"/>
<rect x="565.4" y="705.5" width="4" height="4" fill="#fff" stroke="#60e060" stroke-width="1"/>
<rect x="980.8" y="903.8" width="5" height="5" fill="#20d020"/>
<rect x="993.8" y="904.3" width="4" height="4" fill="#fff" stroke="#60e060" stroke-width="1"/>
<rect x="1027.5" y="572.2" width="5" height="5" fill="#800080"/>
<rect x="1040.0" y="572.7" width="4" height="4" fill="#fff" stroke="#c080c0" stroke-width="1"/>
<rect x="1045.5" y="572.2" width="5" height="5" fill="#800080"/>
<rect x="1058.0" y="572.7" width="4" height="4" fill="#fff" stroke="#c080c0" stroke-width="1"/>
<rect x="1077.5" y="582.5" width="5" height="5" fill="#800080"/>
<rect x="1089.5" y="590.3" width="5" height="5" fill="#800080"/>
<rect x="987.0" y="590.3" width="5" height="5" fill="#800080"/>
<rect x="1066.0" y="590.8" width="4" height="4" fill="#fff" stroke="#c080c0" stroke-width="1"/>
<rect x="1114.0" y="590.8" width="4" height="4" fill="#fff" stroke="#c080c0" stroke-width="1"/>
<rect x="1138.3" y="590.3" width="5" height="5" fill="#800080"/>
<rect x="1095.5" y="662.3" width="5" height="5" fill="#800080"/>
<rect x="1108.0" y="662.8" width="4" height="4" fill="#fff" stroke="#c080c0" stroke-width="1"/>
<rect x="1102.2" y="668.0" width="4" height="4" fill="#fff" stroke="#c080c0" stroke-width="1"/>
<rect x="1027.5" y="662.3" width="5" height="5" fill="#800080"/>
<rect x="1044.0" y="662.8" width="4" height="4" fill="#fff" stroke="#c080c0" stroke-width="1"/>
<rect x="997.0" y="665.0" width="4" height="4" fill="#fff" stroke="#c080c0" stroke-width="1"/>
<rect x="709.95" y="536.05" width="4.5" height="4.5" fill="#1010d0"/>
<rect x="806.05" y="457.75" width="4.5" height="4.5" fill="#1010d0"/>
<rect x="565.15" y="702.75" width="4.5" height="4.5" fill="#1010d0"/>
<rect x="565.25" y="771.05" width="4.5" height="4.5" fill="#1010d0"/>
<rect x="1126.15" y="602.75" width="4.5" height="4.5" fill="#1010d0"/>
<rect x="1192.25" y="542.25" width="4.5" height="4.5" fill="#1010d0"/>
<rect x="1330.75" y="602.75" width="4.5" height="4.5" fill="#1010d0"/>
<rect x="1307.75" y="614.45" width="4.5" height="4.5" fill="#1010d0"/>
<rect x="1286.05" y="704.95" width="4.5" height="4.5" fill="#1010d0"/>
<rect x="1415.25" y="704.95" width="4.5" height="4.5" fill="#1010d0"/>
<rect x="915.25" y="916.55" width="4.5" height="4.5" fill="#1010d0"/>
<rect x="993.55" y="861.95" width="4.5" height="4.5" fill="#1010d0"/>
<rect x="1041.75" y="711.05" width="4.5" height="4.5" fill="#1010d0"/>
<rect x="565.15" y="717.25" width="4.5" height="4.5" fill="#1010d0"/>
<rect x="577.45" y="662.75" width="4.5" height="4.5" fill="#1010d0"/>
<rect x="770.75" y="662.75" width="4.5" height="4.5" fill="#1010d0"/>
<rect x="667.75" y="657.75" width="4.5" height="4.5" fill="#1010d0"/>
<rect x="667.75" y="620.75" width="4.5" height="4.5" fill="#1010d0"/>
<rect x="746.05" y="728.75" width="4.5" height="4.5" fill="#1010d0"/>
<rect x="788.05" y="734.75" width="4.5" height="4.5" fill="#1010d0"/>
<rect x="631.75" y="662.75" width="4.5" height="4.5" fill="#1010d0"/>
<rect x="1156.05" y="946.05" width="4.5" height="4.5" fill="#1010d0"/>
<path d="M363,654.4 H465 M414.6,643.2 V671" stroke="#555" stroke-width="1" fill="none"/>
<text x="410.1" y="650.6" font-size="9.3" text-anchor="end" fill="#111" font-family="Liberation Sans">2400<tspan font-size="6" dx="3.3" fill="#333">kg/h</tspan></text>
<text x="410.1" y="664.4" font-size="9.3" text-anchor="end" fill="#111" font-family="Liberation Sans">2<tspan font-size="6" dx="3.3" fill="#333">bar</tspan></text>
<text x="420.1" y="650.6" font-size="9.3" text-anchor="start" fill="#111" font-family="Liberation Sans">6<tspan font-size="6" dx="3.3" fill="#333">m3/h</tspan></text>
<text x="420.1" y="664.4" font-size="9.3" text-anchor="start" fill="#111" font-family="Liberation Sans">25<tspan font-size="6" dx="3.3" fill="#333">°C</tspan></text>
<path d="M541.3,510.3 H644.2 M592.8,498.3 V526" stroke="#555" stroke-width="1" fill="none"/>
<text x="588.3" y="506.5" font-size="9.3" text-anchor="end" fill="#111" font-family="Liberation Sans">2866.2<tspan font-size="6" dx="3.3" fill="#333">kg/h</tspan></text>
<text x="588.3" y="520.3" font-size="9.3" text-anchor="end" fill="#111" font-family="Liberation Sans">1.02<tspan font-size="6" dx="3.3" fill="#333">bar</tspan></text>
<text x="598.3" y="506.5" font-size="9.3" text-anchor="start" fill="#111" font-family="Liberation Sans">2987<tspan font-size="6" dx="3.3" fill="#333">Nm3/h</tspan></text>
<text x="598.3" y="520.3" font-size="9.3" text-anchor="start" fill="#111" font-family="Liberation Sans">870<tspan font-size="6" dx="3.3" fill="#333">°C</tspan></text>
<path d="M698.3,443.3 H800.8 M749.7,432 V460" stroke="#555" stroke-width="1" fill="none"/>
<text x="745.2" y="439.5" font-size="9.3" text-anchor="end" fill="#111" font-family="Liberation Sans">32830<tspan font-size="6" dx="3.3" fill="#333">kg/h</tspan></text>
<text x="745.2" y="453.3" font-size="9.3" text-anchor="end" fill="#111" font-family="Liberation Sans">3.5<tspan font-size="6" dx="3.3" fill="#333">bar</tspan></text>
<text x="755.2" y="439.5" font-size="9.3" text-anchor="start" fill="#111" font-family="Liberation Sans">34.81<tspan font-size="6" dx="3.3" fill="#333">m3/h</tspan></text>
<text x="755.2" y="453.3" font-size="9.3" text-anchor="start" fill="#111" font-family="Liberation Sans">120<tspan font-size="6" dx="3.3" fill="#333">°C</tspan></text>
<path d="M717.5,510.3 H819 M768.3,498 V526" stroke="#555" stroke-width="1" fill="none"/>
<text x="763.8" y="506.5" font-size="9.3" text-anchor="end" fill="#111" font-family="Liberation Sans">2866.2<tspan font-size="6" dx="3.3" fill="#333">kg/h</tspan></text>
<text x="763.8" y="520.3" font-size="9.3" text-anchor="end" fill="#111" font-family="Liberation Sans">1.01<tspan font-size="6" dx="3.3" fill="#333">bar</tspan></text>
<text x="773.8" y="506.5" font-size="9.3" text-anchor="start" fill="#111" font-family="Liberation Sans">2987<tspan font-size="6" dx="3.3" fill="#333">Nm3/h</tspan></text>
<text x="773.8" y="520.3" font-size="9.3" text-anchor="start" fill="#111" font-family="Liberation Sans">150<tspan font-size="6" dx="3.3" fill="#333">°C</tspan></text>
<path d="M573.7,552.5 H675.8 M624.7,540.3 V568" stroke="#555" stroke-width="1" fill="none"/>
<text x="620.2" y="548.7" font-size="9.3" text-anchor="end" fill="#111" font-family="Liberation Sans">32830<tspan font-size="6" dx="3.3" fill="#333">kg/h</tspan></text>
<text x="620.2" y="562.5" font-size="9.3" text-anchor="end" fill="#111" font-family="Liberation Sans">4<tspan font-size="6" dx="3.3" fill="#333">bar</tspan></text>
<text x="630.2" y="548.7" font-size="9.3" text-anchor="start" fill="#111" font-family="Liberation Sans">34.006<tspan font-size="6" dx="3.3" fill="#333">m3/h</tspan></text>
<text x="630.2" y="562.5" font-size="9.3" text-anchor="start" fill="#111" font-family="Liberation Sans">90<tspan font-size="6" dx="3.3" fill="#333">°C</tspan></text>
<path d="M730.8,558.3 H832.5 M781.3,546.7 V574" stroke="#555" stroke-width="1" fill="none"/>
<text x="776.8" y="554.5" font-size="9.3" text-anchor="end" fill="#111" font-family="Liberation Sans">296.016<tspan font-size="6" dx="3.3" fill="#333">kg/h</tspan></text>
<text x="786.8" y="568.3" font-size="9.3" text-anchor="start" fill="#111" font-family="Liberation Sans">150<tspan font-size="6" dx="3.3" fill="#333">°C</tspan></text>
<path d="M573.7,600.3 H676.2 M624.7,588.3 V616.7" stroke="#555" stroke-width="1" fill="none"/>
<text x="620.2" y="596.5" font-size="9.3" text-anchor="end" fill="#111" font-family="Liberation Sans">100<tspan font-size="6" dx="3.3" fill="#333">kg/h</tspan></text>
<text x="630.2" y="610.3" font-size="9.3" text-anchor="start" fill="#111" font-family="Liberation Sans">920<tspan font-size="6" dx="3.3" fill="#333">°C</tspan></text>
<path d="M673.3,648.3 H775.3 M724.5,637.5 V665" stroke="#555" stroke-width="1" fill="none"/>
<text x="720.0" y="644.5" font-size="9.3" text-anchor="end" fill="#111" font-family="Liberation Sans">134991<tspan font-size="6" dx="3.3" fill="#333">kg/h</tspan></text>
<text x="730.0" y="658.3" font-size="9.3" text-anchor="start" fill="#111" font-family="Liberation Sans">920<tspan font-size="6" dx="3.3" fill="#333">°C</tspan></text>
<path d="M595.8,681.2 H698.3 M647,665 V693.3" stroke="#555" stroke-width="1" fill="none"/>
<text x="642.5" y="677.4000000000001" font-size="9.3" text-anchor="end" fill="#111" font-family="Liberation Sans">135091<tspan font-size="6" dx="3.3" fill="#333">kg/h</tspan></text>
<text x="652.5" y="691.2" font-size="9.3" text-anchor="start" fill="#111" font-family="Liberation Sans">920<tspan font-size="6" dx="3.3" fill="#333">°C</tspan></text>
<path d="M461.3,707.3 H567 M512.4,695 V718.5" stroke="#555" stroke-width="1" fill="none"/>
<text x="507.9" y="703.5" font-size="9.3" text-anchor="end" fill="#111" font-family="Liberation Sans">300<tspan font-size="6" dx="3.3" fill="#333">kg/h</tspan></text>
<text x="507.9" y="717.3" font-size="9.3" text-anchor="end" fill="#111" font-family="Liberation Sans">3<tspan font-size="6" dx="3.3" fill="#333">bar</tspan></text>
<text x="517.9" y="703.5" font-size="9.3" text-anchor="start" fill="#111" font-family="Liberation Sans">622.1<tspan font-size="6" dx="3.3" fill="#333">Nm3/h</tspan></text>
<text x="517.9" y="717.3" font-size="9.3" text-anchor="start" fill="#111" font-family="Liberation Sans">450<tspan font-size="6" dx="3.3" fill="#333">°C</tspan></text>
<path d="M631.3,721.3 H733.8 M682.5,709.2 V737" stroke="#555" stroke-width="1" fill="none"/>
<text x="678.0" y="717.5" font-size="9.3" text-anchor="end" fill="#111" font-family="Liberation Sans">135125<tspan font-size="6" dx="3.3" fill="#333">kg/h</tspan></text>
<text x="688.0" y="731.3" font-size="9.3" text-anchor="start" fill="#111" font-family="Liberation Sans">870<tspan font-size="6" dx="3.3" fill="#333">°C</tspan></text>
<path d="M433.3,769.5 H535.8 M484.5,757.5 V785.3" stroke="#555" stroke-width="1" fill="none"/>
<text x="480.0" y="765.7" font-size="9.3" text-anchor="end" fill="#111" font-family="Liberation Sans">500<tspan font-size="6" dx="3.3" fill="#333">kg/h</tspan></text>
<text x="480.0" y="779.5" font-size="9.3" text-anchor="end" fill="#111" font-family="Liberation Sans">5<tspan font-size="6" dx="3.3" fill="#333">bar</tspan></text>
<text x="490.0" y="765.7" font-size="9.3" text-anchor="start" fill="#111" font-family="Liberation Sans">0.5014<tspan font-size="6" dx="3.3" fill="#333">m3/h</tspan></text>
<text x="490.0" y="779.5" font-size="9.3" text-anchor="start" fill="#111" font-family="Liberation Sans">25<tspan font-size="6" dx="3.3" fill="#333">°C</tspan></text>
<path d="M373.3,835.5 H475.8 M424.5,824.2 V852" stroke="#555" stroke-width="1" fill="none"/>
<text x="420.0" y="831.7" font-size="9.3" text-anchor="end" fill="#111" font-family="Liberation Sans">4818.7<tspan font-size="6" dx="3.3" fill="#333">kg/h</tspan></text>
<text x="420.0" y="845.5" font-size="9.3" text-anchor="end" fill="#111" font-family="Liberation Sans">0.9836<tspan font-size="6" dx="3.3" fill="#333">bar</tspan></text>
<text x="430.0" y="831.7" font-size="9.3" text-anchor="start" fill="#111" font-family="Liberation Sans">3739<tspan font-size="6" dx="3.3" fill="#333">Nm3/h</tspan></text>
<text x="430.0" y="845.5" font-size="9.3" text-anchor="start" fill="#111" font-family="Liberation Sans">10<tspan font-size="6" dx="3.3" fill="#333">°C</tspan></text>
<path d="M544.2,835.5 H646.7 M595.5,824 V852" stroke="#555" stroke-width="1" fill="none"/>
<text x="591.0" y="831.7" font-size="9.3" text-anchor="end" fill="#111" font-family="Liberation Sans">4818.7<tspan font-size="6" dx="3.3" fill="#333">kg/h</tspan></text>
<text x="591.0" y="845.5" font-size="9.3" text-anchor="end" fill="#111" font-family="Liberation Sans">1.2<tspan font-size="6" dx="3.3" fill="#333">bar</tspan></text>
<text x="601.0" y="831.7" font-size="9.3" text-anchor="start" fill="#111" font-family="Liberation Sans">3739<tspan font-size="6" dx="3.3" fill="#333">Nm3/h</tspan></text>
<text x="601.0" y="845.5" font-size="9.3" text-anchor="start" fill="#111" font-family="Liberation Sans">37.56<tspan font-size="6" dx="3.3" fill="#333">°C</tspan></text>
<path d="M802.5,666.3 H910 M858.3,655.3 V678.3" stroke="#555" stroke-width="1" fill="none"/>
<text x="853.8" y="662.5" font-size="9.3" text-anchor="end" fill="#111" font-family="Liberation Sans">1.4047e+5<tspan font-size="6" dx="3.3" fill="#333">kg/h</tspan></text>
<text x="853.8" y="676.3" font-size="9.3" text-anchor="end" fill="#111" font-family="Liberation Sans">1.2<tspan font-size="6" dx="3.3" fill="#333">bar</tspan></text>
<text x="863.8" y="662.5" font-size="9.3" text-anchor="start" fill="#111" font-family="Liberation Sans">4007<tspan font-size="6" dx="3.3" fill="#333">Nm3/h</tspan></text>
<text x="863.8" y="676.3" font-size="9.3" text-anchor="start" fill="#111" font-family="Liberation Sans">920<tspan font-size="6" dx="3.3" fill="#333">°C</tspan></text>
<path d="M883,640.3 H989 M934.7,628.3 V651.7" stroke="#555" stroke-width="1" fill="none"/>
<text x="930.2" y="636.5" font-size="9.3" text-anchor="end" fill="#111" font-family="Liberation Sans">30738<tspan font-size="6" dx="3.3" fill="#333">kg/h</tspan></text>
<text x="930.2" y="650.3" font-size="9.3" text-anchor="end" fill="#111" font-family="Liberation Sans">1<tspan font-size="6" dx="3.3" fill="#333">bar</tspan></text>
<text x="940.2" y="636.5" font-size="9.3" text-anchor="start" fill="#111" font-family="Liberation Sans">34.1531<tspan font-size="6" dx="3.3" fill="#333">m3/h</tspan></text>
<text x="940.2" y="650.3" font-size="9.3" text-anchor="start" fill="#111" font-family="Liberation Sans">84.51<tspan font-size="6" dx="3.3" fill="#333">°C</tspan></text>
<path d="M1059,516.2 H1161 M1110.3,504 V532.8" stroke="#555" stroke-width="1" fill="none"/>
<text x="1105.8" y="512.4000000000001" font-size="9.3" text-anchor="end" fill="#111" font-family="Liberation Sans">1618.3<tspan font-size="6" dx="3.3" fill="#333">kg/h</tspan></text>
<text x="1105.8" y="526.2" font-size="9.3" text-anchor="end" fill="#111" font-family="Liberation Sans">0.96<tspan font-size="6" dx="3.3" fill="#333">bar</tspan></text>
<text x="1115.8" y="512.4000000000001" font-size="9.3" text-anchor="start" fill="#111" font-family="Liberation Sans">1806<tspan font-size="6" dx="3.3" fill="#333">Nm3/h</tspan></text>
<text x="1115.8" y="526.2" font-size="9.3" text-anchor="start" fill="#111" font-family="Liberation Sans">42<tspan font-size="6" dx="3.3" fill="#333">°C</tspan></text>
<path d="M1023.3,558.3 H1125.5 M1074.6,546.6 V574.7" stroke="#555" stroke-width="1" fill="none"/>
<text x="1070.1" y="554.5" font-size="9.3" text-anchor="end" fill="#111" font-family="Liberation Sans">25<tspan font-size="6" dx="3.3" fill="#333">kg/h</tspan></text>
<text x="1070.1" y="568.3" font-size="9.3" text-anchor="end" fill="#111" font-family="Liberation Sans">1.96<tspan font-size="6" dx="3.3" fill="#333">bar</tspan></text>
<text x="1080.1" y="554.5" font-size="9.3" text-anchor="start" fill="#111" font-family="Liberation Sans">0.0277778<tspan font-size="6" dx="3.3" fill="#333">m3/h</tspan></text>
<text x="1080.1" y="568.3" font-size="9.3" text-anchor="start" fill="#111" font-family="Liberation Sans">40<tspan font-size="6" dx="3.3" fill="#333">°C</tspan></text>
<path d="M1129,567.6 H1235.3 M1184.1,555.3 V579" stroke="#555" stroke-width="1" fill="none"/>
<text x="1179.6" y="563.8000000000001" font-size="9.3" text-anchor="end" fill="#111" font-family="Liberation Sans">62162<tspan font-size="6" dx="3.3" fill="#333">kg/h</tspan></text>
<text x="1179.6" y="577.6" font-size="9.3" text-anchor="end" fill="#111" font-family="Liberation Sans">1.5<tspan font-size="6" dx="3.3" fill="#333">bar</tspan></text>
<text x="1189.6" y="563.8000000000001" font-size="9.3" text-anchor="start" fill="#111" font-family="Liberation Sans">62.535<tspan font-size="6" dx="3.3" fill="#333">m3/h</tspan></text>
<text x="1189.6" y="577.6" font-size="9.3" text-anchor="start" fill="#111" font-family="Liberation Sans">35<tspan font-size="6" dx="3.3" fill="#333">°C</tspan></text>
<path d="M1064.2,633.3 H1166.6 M1115.4,618.2 V644.8" stroke="#555" stroke-width="1" fill="none"/>
<text x="1110.9" y="629.5" font-size="9.3" text-anchor="end" fill="#111" font-family="Liberation Sans">62162<tspan font-size="6" dx="3.3" fill="#333">kg/h</tspan></text>
<text x="1110.9" y="643.3" font-size="9.3" text-anchor="end" fill="#111" font-family="Liberation Sans">2<tspan font-size="6" dx="3.3" fill="#333">bar</tspan></text>
<text x="1120.9" y="629.5" font-size="9.3" text-anchor="start" fill="#111" font-family="Liberation Sans">62.342<tspan font-size="6" dx="3.3" fill="#333">m3/h</tspan></text>
<text x="1120.9" y="643.3" font-size="9.3" text-anchor="start" fill="#111" font-family="Liberation Sans">25<tspan font-size="6" dx="3.3" fill="#333">°C</tspan></text>
<path d="M993,697 H1095 M1044.5,685.8 V708.3" stroke="#555" stroke-width="1" fill="none"/>
<text x="1040.0" y="693.2" font-size="9.3" text-anchor="end" fill="#111" font-family="Liberation Sans">949.16<tspan font-size="6" dx="3.3" fill="#333">kg/h</tspan></text>
<text x="1040.0" y="707" font-size="9.3" text-anchor="end" fill="#111" font-family="Liberation Sans">1<tspan font-size="6" dx="3.3" fill="#333">bar</tspan></text>
<text x="1050.0" y="693.2" font-size="9.3" text-anchor="start" fill="#111" font-family="Liberation Sans">0.97962<tspan font-size="6" dx="3.3" fill="#333">m3/h</tspan></text>
<text x="1050.0" y="707" font-size="9.3" text-anchor="start" fill="#111" font-family="Liberation Sans">84.51<tspan font-size="6" dx="3.3" fill="#333">°C</tspan></text>
<path d="M1105,704.2 H1212 M1159.5,692.5 V715.8" stroke="#555" stroke-width="1" fill="none"/>
<text x="1155.0" y="700.4000000000001" font-size="9.3" text-anchor="end" fill="#111" font-family="Liberation Sans">27.781<tspan font-size="6" dx="3.3" fill="#333">kg/h</tspan></text>
<text x="1155.0" y="714.2" font-size="9.3" text-anchor="end" fill="#111" font-family="Liberation Sans">3.46<tspan font-size="6" dx="3.3" fill="#333">bar</tspan></text>
<text x="1165.0" y="700.4000000000001" font-size="9.3" text-anchor="start" fill="#111" font-family="Liberation Sans">0.0309665<tspan font-size="6" dx="3.3" fill="#333">m3/h</tspan></text>
<text x="1165.0" y="714.2" font-size="9.3" text-anchor="start" fill="#111" font-family="Liberation Sans">84.74<tspan font-size="6" dx="3.3" fill="#333">°C</tspan></text>
<path d="M1159.2,753.3 H1261.7 M1210.3,737 V770" stroke="#555" stroke-width="1" fill="none"/>
<text x="1205.8" y="749.5" font-size="9.3" text-anchor="end" fill="#111" font-family="Liberation Sans">197.97<tspan font-size="6" dx="3.3" fill="#333">kg/h</tspan></text>
<text x="1205.8" y="763.3" font-size="9.3" text-anchor="end" fill="#111" font-family="Liberation Sans">1.2<tspan font-size="6" dx="3.3" fill="#333">bar</tspan></text>
<text x="1215.8" y="749.5" font-size="9.3" text-anchor="start" fill="#111" font-family="Liberation Sans">220.9<tspan font-size="6" dx="3.3" fill="#333">Nm3/h</tspan></text>
<text x="1215.8" y="763.3" font-size="9.3" text-anchor="start" fill="#111" font-family="Liberation Sans">72.22<tspan font-size="6" dx="3.3" fill="#333">°C</tspan></text>
<path d="M1333.9,449.5 H1435.9 M1384.7,437.6 V466" stroke="#555" stroke-width="1" fill="none"/>
<text x="1380.2" y="445.7" font-size="9.3" text-anchor="end" fill="#111" font-family="Liberation Sans">11692<tspan font-size="6" dx="3.3" fill="#333">kg/h</tspan></text>
<text x="1380.2" y="459.5" font-size="9.3" text-anchor="end" fill="#111" font-family="Liberation Sans">0.9836<tspan font-size="6" dx="3.3" fill="#333">bar</tspan></text>
<text x="1390.2" y="445.7" font-size="9.3" text-anchor="start" fill="#111" font-family="Liberation Sans">9073<tspan font-size="6" dx="3.3" fill="#333">Nm3/h</tspan></text>
<text x="1390.2" y="459.5" font-size="9.3" text-anchor="start" fill="#111" font-family="Liberation Sans">200<tspan font-size="6" dx="3.3" fill="#333">°C</tspan></text>
<path d="M1333.8,551.3 H1440 M1389.5,540 V563.3" stroke="#555" stroke-width="1" fill="none"/>
<text x="1385.0" y="547.5" font-size="9.3" text-anchor="end" fill="#111" font-family="Liberation Sans">13112<tspan font-size="6" dx="3.3" fill="#333">kg/h</tspan></text>
<text x="1385.0" y="561.3" font-size="9.3" text-anchor="end" fill="#111" font-family="Liberation Sans">0.9836<tspan font-size="6" dx="3.3" fill="#333">bar</tspan></text>
<text x="1395.0" y="547.5" font-size="9.3" text-anchor="start" fill="#111" font-family="Liberation Sans">1.066e+4<tspan font-size="6" dx="3.3" fill="#333">Nm3/h</tspan></text>
<text x="1395.0" y="561.3" font-size="9.3" text-anchor="start" fill="#111" font-family="Liberation Sans">176.1<tspan font-size="6" dx="3.3" fill="#333">°C</tspan></text>
<path d="M1345.8,656.7 H1452.5 M1401.3,645 V668.3" stroke="#555" stroke-width="1" fill="none"/>
<text x="1396.8" y="652.9000000000001" font-size="9.3" text-anchor="end" fill="#111" font-family="Liberation Sans">13112<tspan font-size="6" dx="3.3" fill="#333">kg/h</tspan></text>
<text x="1396.8" y="666.7" font-size="9.3" text-anchor="end" fill="#111" font-family="Liberation Sans">0.9936<tspan font-size="6" dx="3.3" fill="#333">bar</tspan></text>
<text x="1406.8" y="652.9000000000001" font-size="9.3" text-anchor="start" fill="#111" font-family="Liberation Sans">1.024e+4<tspan font-size="6" dx="3.3" fill="#333">Nm3/h</tspan></text>
<text x="1406.8" y="666.7" font-size="9.3" text-anchor="start" fill="#111" font-family="Liberation Sans">400<tspan font-size="6" dx="3.3" fill="#333">°C</tspan></text>
<path d="M1352.5,690.8 H1455 M1404.7,679.2 V707" stroke="#555" stroke-width="1" fill="none"/>
<text x="1400.2" y="687.0" font-size="9.3" text-anchor="end" fill="#111" font-family="Liberation Sans">28912<tspan font-size="6" dx="3.3" fill="#333">kg/h</tspan></text>
<text x="1400.2" y="700.8" font-size="9.3" text-anchor="end" fill="#111" font-family="Liberation Sans">3.5<tspan font-size="6" dx="3.3" fill="#333">bar</tspan></text>
<text x="1410.2" y="687.0" font-size="9.3" text-anchor="start" fill="#111" font-family="Liberation Sans">30.656<tspan font-size="6" dx="3.3" fill="#333">m3/h</tspan></text>
<text x="1410.2" y="700.8" font-size="9.3" text-anchor="start" fill="#111" font-family="Liberation Sans">120<tspan font-size="6" dx="3.3" fill="#333">°C</tspan></text>
<path d="M1245.8,723 H1347.5 M1296.7,707 V735" stroke="#555" stroke-width="1" fill="none"/>
<text x="1292.2" y="719.2" font-size="9.3" text-anchor="end" fill="#111" font-family="Liberation Sans">28912<tspan font-size="6" dx="3.3" fill="#333">kg/h</tspan></text>
<text x="1292.2" y="733" font-size="9.3" text-anchor="end" fill="#111" font-family="Liberation Sans">4<tspan font-size="6" dx="3.3" fill="#333">bar</tspan></text>
<text x="1302.2" y="719.2" font-size="9.3" text-anchor="start" fill="#111" font-family="Liberation Sans">29.947<tspan font-size="6" dx="3.3" fill="#333">m3/h</tspan></text>
<text x="1302.2" y="733" font-size="9.3" text-anchor="start" fill="#111" font-family="Liberation Sans">90<tspan font-size="6" dx="3.3" fill="#333">°C</tspan></text>
<path d="M807.5,769.5 H910 M858.3,757.5 V785.5" stroke="#555" stroke-width="1" fill="none"/>
<text x="853.8" y="765.7" font-size="9.3" text-anchor="end" fill="#111" font-family="Liberation Sans">11692<tspan font-size="6" dx="3.3" fill="#333">kg/h</tspan></text>
<text x="853.8" y="779.5" font-size="9.3" text-anchor="end" fill="#111" font-family="Liberation Sans">0.9836<tspan font-size="6" dx="3.3" fill="#333">bar</tspan></text>
<text x="863.8" y="765.7" font-size="9.3" text-anchor="start" fill="#111" font-family="Liberation Sans">9073<tspan font-size="6" dx="3.3" fill="#333">Nm3/h</tspan></text>
<text x="863.8" y="779.5" font-size="9.3" text-anchor="start" fill="#111" font-family="Liberation Sans">10<tspan font-size="6" dx="3.3" fill="#333">°C</tspan></text>
<path d="M905.3,847.5 H1008 M956.7,836.3 V864.2" stroke="#555" stroke-width="1" fill="none"/>
<text x="952.2" y="843.7" font-size="9.3" text-anchor="end" fill="#111" font-family="Liberation Sans">20821<tspan font-size="6" dx="3.3" fill="#333">kg/h</tspan></text>
<text x="952.2" y="857.5" font-size="9.3" text-anchor="end" fill="#111" font-family="Liberation Sans">3.5<tspan font-size="6" dx="3.3" fill="#333">bar</tspan></text>
<text x="962.2" y="843.7" font-size="9.3" text-anchor="start" fill="#111" font-family="Liberation Sans">22.077<tspan font-size="6" dx="3.3" fill="#333">m3/h</tspan></text>
<text x="962.2" y="857.5" font-size="9.3" text-anchor="start" fill="#111" font-family="Liberation Sans">120<tspan font-size="6" dx="3.3" fill="#333">°C</tspan></text>
<path d="M780.8,886.3 H887 M831.3,874.2 V898.3" stroke="#555" stroke-width="1" fill="none"/>
<text x="826.8" y="882.5" font-size="9.3" text-anchor="end" fill="#111" font-family="Liberation Sans">5474.2<tspan font-size="6" dx="3.3" fill="#333">kg/h</tspan></text>
<text x="826.8" y="896.3" font-size="9.3" text-anchor="end" fill="#111" font-family="Liberation Sans">1<tspan font-size="6" dx="3.3" fill="#333">bar</tspan></text>
<text x="836.8" y="882.5" font-size="9.3" text-anchor="start" fill="#111" font-family="Liberation Sans">4007<tspan font-size="6" dx="3.3" fill="#333">Nm3/h</tspan></text>
<text x="836.8" y="896.3" font-size="9.3" text-anchor="start" fill="#111" font-family="Liberation Sans">585.4<tspan font-size="6" dx="3.3" fill="#333">°C</tspan></text>
<path d="M810.3,964.6 H912.9 M861.5,948.4 V976.3" stroke="#555" stroke-width="1" fill="none"/>
<text x="857.0" y="960.8000000000001" font-size="9.3" text-anchor="end" fill="#111" font-family="Liberation Sans">20821<tspan font-size="6" dx="3.3" fill="#333">kg/h</tspan></text>
<text x="857.0" y="974.6" font-size="9.3" text-anchor="end" fill="#111" font-family="Liberation Sans">4<tspan font-size="6" dx="3.3" fill="#333">bar</tspan></text>
<text x="867.0" y="960.8000000000001" font-size="9.3" text-anchor="start" fill="#111" font-family="Liberation Sans">21.567<tspan font-size="6" dx="3.3" fill="#333">m3/h</tspan></text>
<text x="867.0" y="974.6" font-size="9.3" text-anchor="start" fill="#111" font-family="Liberation Sans">90<tspan font-size="6" dx="3.3" fill="#333">°C</tspan></text>
<path d="M960.8,922.5 H1063 M1012,906 V934.2" stroke="#555" stroke-width="1" fill="none"/>
<text x="1007.5" y="918.7" font-size="9.3" text-anchor="end" fill="#111" font-family="Liberation Sans">5474.2<tspan font-size="6" dx="3.3" fill="#333">kg/h</tspan></text>
<text x="1007.5" y="932.5" font-size="9.3" text-anchor="end" fill="#111" font-family="Liberation Sans">0.99<tspan font-size="6" dx="3.3" fill="#333">bar</tspan></text>
<text x="1017.5" y="918.7" font-size="9.3" text-anchor="start" fill="#111" font-family="Liberation Sans">4007<tspan font-size="6" dx="3.3" fill="#333">Nm3/h</tspan></text>
<text x="1017.5" y="932.5" font-size="9.3" text-anchor="start" fill="#111" font-family="Liberation Sans">157.7<tspan font-size="6" dx="3.3" fill="#333">°C</tspan></text>
<path d="M1101.3,877.8 H1203.7 M1152.5,866.3 V894.5" stroke="#555" stroke-width="1" fill="none"/>
<text x="1148.0" y="874.0" font-size="9.3" text-anchor="end" fill="#111" font-family="Liberation Sans">5358.4<tspan font-size="6" dx="3.3" fill="#333">kg/h</tspan></text>
<text x="1148.0" y="887.8" font-size="9.3" text-anchor="end" fill="#111" font-family="Liberation Sans">0.98<tspan font-size="6" dx="3.3" fill="#333">bar</tspan></text>
<text x="1158.0" y="874.0" font-size="9.3" text-anchor="start" fill="#111" font-family="Liberation Sans">4007<tspan font-size="6" dx="3.3" fill="#333">Nm3/h</tspan></text>
<text x="1158.0" y="887.8" font-size="9.3" text-anchor="start" fill="#111" font-family="Liberation Sans">150<tspan font-size="6" dx="3.3" fill="#333">°C</tspan></text>
<path d="M1102,932.5 H1204.7 M1153.3,920 V948.3" stroke="#555" stroke-width="1" fill="none"/>
<text x="1148.8" y="928.7" font-size="9.3" text-anchor="end" fill="#111" font-family="Liberation Sans">115.749<tspan font-size="6" dx="3.3" fill="#333">kg/h</tspan></text>
<text x="1158.8" y="942.5" font-size="9.3" text-anchor="start" fill="#111" font-family="Liberation Sans">150<tspan font-size="6" dx="3.3" fill="#333">°C</tspan></text>
<path d="M1219.2,910.3 H1320.8 M1270.5,894.2 V922.5" stroke="#555" stroke-width="1" fill="none"/>
<text x="1266.0" y="906.5" font-size="9.3" text-anchor="end" fill="#111" font-family="Liberation Sans">5358.4<tspan font-size="6" dx="3.3" fill="#333">kg/h</tspan></text>
<text x="1266.0" y="920.3" font-size="9.3" text-anchor="end" fill="#111" font-family="Liberation Sans">0.9836<tspan font-size="6" dx="3.3" fill="#333">bar</tspan></text>
<text x="1276.0" y="906.5" font-size="9.3" text-anchor="start" fill="#111" font-family="Liberation Sans">4007<tspan font-size="6" dx="3.3" fill="#333">Nm3/h</tspan></text>
<text x="1276.0" y="920.3" font-size="9.3" text-anchor="start" fill="#111" font-family="Liberation Sans">150.7<tspan font-size="6" dx="3.3" fill="#333">°C</tspan></text>
<path d="M1239.2,829.2 H1345.5 M1290.5,818 V841.7" stroke="#555" stroke-width="1" fill="none"/>
<text x="1286.0" y="825.4000000000001" font-size="9.3" text-anchor="end" fill="#111" font-family="Liberation Sans">13112<tspan font-size="6" dx="3.3" fill="#333">kg/h</tspan></text>
<text x="1286.0" y="839.2" font-size="9.3" text-anchor="end" fill="#111" font-family="Liberation Sans">0.9836<tspan font-size="6" dx="3.3" fill="#333">bar</tspan></text>
<text x="1296.0" y="825.4000000000001" font-size="9.3" text-anchor="start" fill="#111" font-family="Liberation Sans">1.024e+4<tspan font-size="6" dx="3.3" fill="#333">Nm3/h</tspan></text>
<text x="1296.0" y="839.2" font-size="9.3" text-anchor="start" fill="#111" font-family="Liberation Sans">150<tspan font-size="6" dx="3.3" fill="#333">°C</tspan></text>
<path d="M1342.5,878 H1445 M1393.8,866.2 V894.2" stroke="#555" stroke-width="1" fill="none"/>
<text x="1389.3" y="874.2" font-size="9.3" text-anchor="end" fill="#111" font-family="Liberation Sans">18471<tspan font-size="6" dx="3.3" fill="#333">kg/h</tspan></text>
<text x="1389.3" y="888" font-size="9.3" text-anchor="end" fill="#111" font-family="Liberation Sans">0.9836<tspan font-size="6" dx="3.3" fill="#333">bar</tspan></text>
<text x="1399.3" y="874.2" font-size="9.3" text-anchor="start" fill="#111" font-family="Liberation Sans">1.425e+4<tspan font-size="6" dx="3.3" fill="#333">Nm3/h</tspan></text>
<text x="1399.3" y="888" font-size="9.3" text-anchor="start" fill="#111" font-family="Liberation Sans">150.2<tspan font-size="6" dx="3.3" fill="#333">°C</tspan></text>
<path d="M378.7,954.5 H527.5 M452.8,939.2 V969.2" stroke="#555" stroke-width="1"/>
<text x="416" y="949.2" font-size="9.4" text-anchor="middle" fill="#111" font-family="Liberation Sans" >Mass_total[kg/h]</text>
<text x="489.5" y="949.2" font-size="9.4" text-anchor="middle" fill="#111" font-family="Liberation Sans" >nvolflow[Nm3/h]</text>
<text x="416" y="965" font-size="9.4" text-anchor="middle" fill="#111" font-family="Liberation Sans" >p[bar]</text>
<text x="489.5" y="965" font-size="9.4" text-anchor="middle" fill="#111" font-family="Liberation Sans" >t[°C]</text>
<text x="648" y="505.8" font-size="9.4" text-anchor="start" fill="#111" font-family="Liberation Sans" >gas cooler</text>
<text x="828.5" y="499.2" font-size="9.4" text-anchor="start" fill="#111" font-family="Liberation Sans" >dust filter</text>
<text x="992" y="518.3" font-size="9.4" text-anchor="start" fill="#111" font-family="Liberation Sans" >product gas</text>
<text x="467" y="620.7" font-size="9.4" text-anchor="start" fill="#111" font-family="Liberation Sans" >internally circulating</text>
<text x="467" y="634.7" font-size="9.4" text-anchor="start" fill="#111" font-family="Liberation Sans" >fluidized bed</text>
<text x="467" y="648.7" font-size="9.4" text-anchor="start" fill="#111" font-family="Liberation Sans" >gasification</text>
<text x="605.8" y="638.7" font-size="9.4" text-anchor="start" fill="#111" font-family="Liberation Sans" >bed material</text>
<text x="605.8" y="652.5" font-size="9.4" text-anchor="start" fill="#111" font-family="Liberation Sans" >make-up</text>
<text x="382.8" y="692.7" font-size="9.4" text-anchor="start" fill="#111" font-family="Liberation Sans" >solid biomass fuel</text>
<text x="587.8" y="758.3" font-size="9.4" text-anchor="start" fill="#111" font-family="Liberation Sans" >steam generator</text>
<text x="587.8" y="772.5999999999999" font-size="9.4" text-anchor="start" fill="#111" font-family="Liberation Sans" >to be replaced with</text>
<text x="587.8" y="786.9" font-size="9.4" text-anchor="start" fill="#111" font-family="Liberation Sans" >realistic model</text>
<text x="696.7" y="758.3" font-size="9.4" text-anchor="start" fill="#111" font-family="Liberation Sans" >externally circulating</text>
<text x="696.7" y="772.5999999999999" font-size="9.4" text-anchor="start" fill="#111" font-family="Liberation Sans" >fluidized bed</text>
<text x="696.7" y="786.9" font-size="9.4" text-anchor="start" fill="#111" font-family="Liberation Sans" >combustion</text>
<text x="1383.3" y="615" font-size="9.4" text-anchor="start" fill="#111" font-family="Liberation Sans" >gas engine</text>
<text x="1154.7" y="970.8" font-size="9.4" text-anchor="start" fill="#111" font-family="Liberation Sans" >fly ash</text>
<text x="1420" y="921.7" font-size="9.4" text-anchor="start" fill="#111" font-family="Liberation Sans" >to stack</text>
</svg>
<div class="a" style="left:1442px;top:228px;width:136px;height:34px;border-radius:6px;background:#f8f9fb;box-shadow:0 1px 3px rgba(0,0,0,0.3)"></div>
<svg style="left:1451px;top:237px" width="14" height="16" viewBox="0 0 14 16"><path d="M1 0.5L14 8L1 15.5Z" fill="#5577c4"/></svg>
<svg style="left:0;top:0" width="1600" height="300" viewBox="0 0 1600 300"><path d="M1485,239.5 V249.7 H1494.5 M1486,248.7 L1494,240.8 Q1498,237.5 1501,240 Q1503.5,242.5 1501.5,249.5" stroke="#5577c4" stroke-width="2.2" fill="none"/><path d="M1534.8,239.5 V249.7 H1525.3 M1533.8,248.7 L1525.8,240.8 Q1521.8,237.5 1518.8,240 Q1516.3,242.5 1518.3,249.5" stroke="#cfcfcf" stroke-width="2.2" fill="none"/></svg>
<svg style="left:1552px;top:236px" width="17" height="17" viewBox="0 0 17 17"><path d="M0.5 0.5H16.5V16.5H3L0.5 14Z" fill="#707070"/><rect x="4" y="0.5" width="9" height="6" fill="#fff"/><path d="M5 2.3H12M5 4.3H12" stroke="#8aa6e0" stroke-width="1"/><rect x="5" y="10" width="8" height="6.5" fill="#fff"/><rect x="6" y="11" width="1.5" height="4.5" fill="#707070"/></svg>
<div class="a" style="left:253px;top:1001px;width:192px;height:37px;border-radius:6px;background:#f8f9fb;box-shadow:0 1px 3px rgba(0,0,0,0.3)"></div>
<div class="a" style="left:325px;top:1005px;width:48px;height:29px;border-radius:7px;background:#fff"></div>
<div class="t" style="left:333px;top:1013px;font-size:13.3px;color:#1a1a1a">100%</div>
<svg style="left:261px;top:1010px" width="20" height="20" viewBox="0 0 20 20"><circle cx="11.5" cy="7.5" r="6.3" stroke="#707070" stroke-width="1.5" fill="none"/><path d="M7 12L1.5 17.5" stroke="#707070" stroke-width="2.6"/><rect x="9.5" y="8" width="7.5" height="9" stroke="#5577c4" stroke-width="1.3" fill="#f8f9fb"/></svg>
<svg style="left:294px;top:1010px" width="20" height="20" viewBox="0 0 20 20"><circle cx="11.5" cy="7.5" r="6.3" stroke="#707070" stroke-width="1.5" fill="none"/><path d="M7 12L1.5 17.5" stroke="#707070" stroke-width="2.6"/><path d="M7.8 7.5H15.2" stroke="#d03040" stroke-width="1.6"/></svg>
<svg style="left:384px;top:1010px" width="20" height="20" viewBox="0 0 20 20"><circle cx="11.5" cy="7.5" r="6.3" stroke="#707070" stroke-width="1.5" fill="none"/><path d="M7 12L1.5 17.5" stroke="#707070" stroke-width="2.6"/><path d="M7.8 7.5H15.2M11.5 3.8V11.2" stroke="#28a050" stroke-width="1.6"/></svg>
<svg style="left:418px;top:1010px" width="20" height="20" viewBox="0 0 20 20"><circle cx="11.5" cy="7.5" r="6.3" stroke="#d6d6d6" stroke-width="1.5" fill="none"/><path d="M7 12L1.5 17.5" stroke="#d6d6d6" stroke-width="2.6"/><path d="M9 13A4 4 0 0 1 17 11M17 13A4 4 0 0 1 9 15" stroke="#cfcfcf" stroke-width="1.4" fill="none"/></svg>
<div class="a" style="left:876px;top:1048px;width:100px;height:5px;background:#bbb"></div>
<div class="a" style="left:1588px;top:576px;width:5px;height:100px;background:#bbb"></div>
</body></html>
